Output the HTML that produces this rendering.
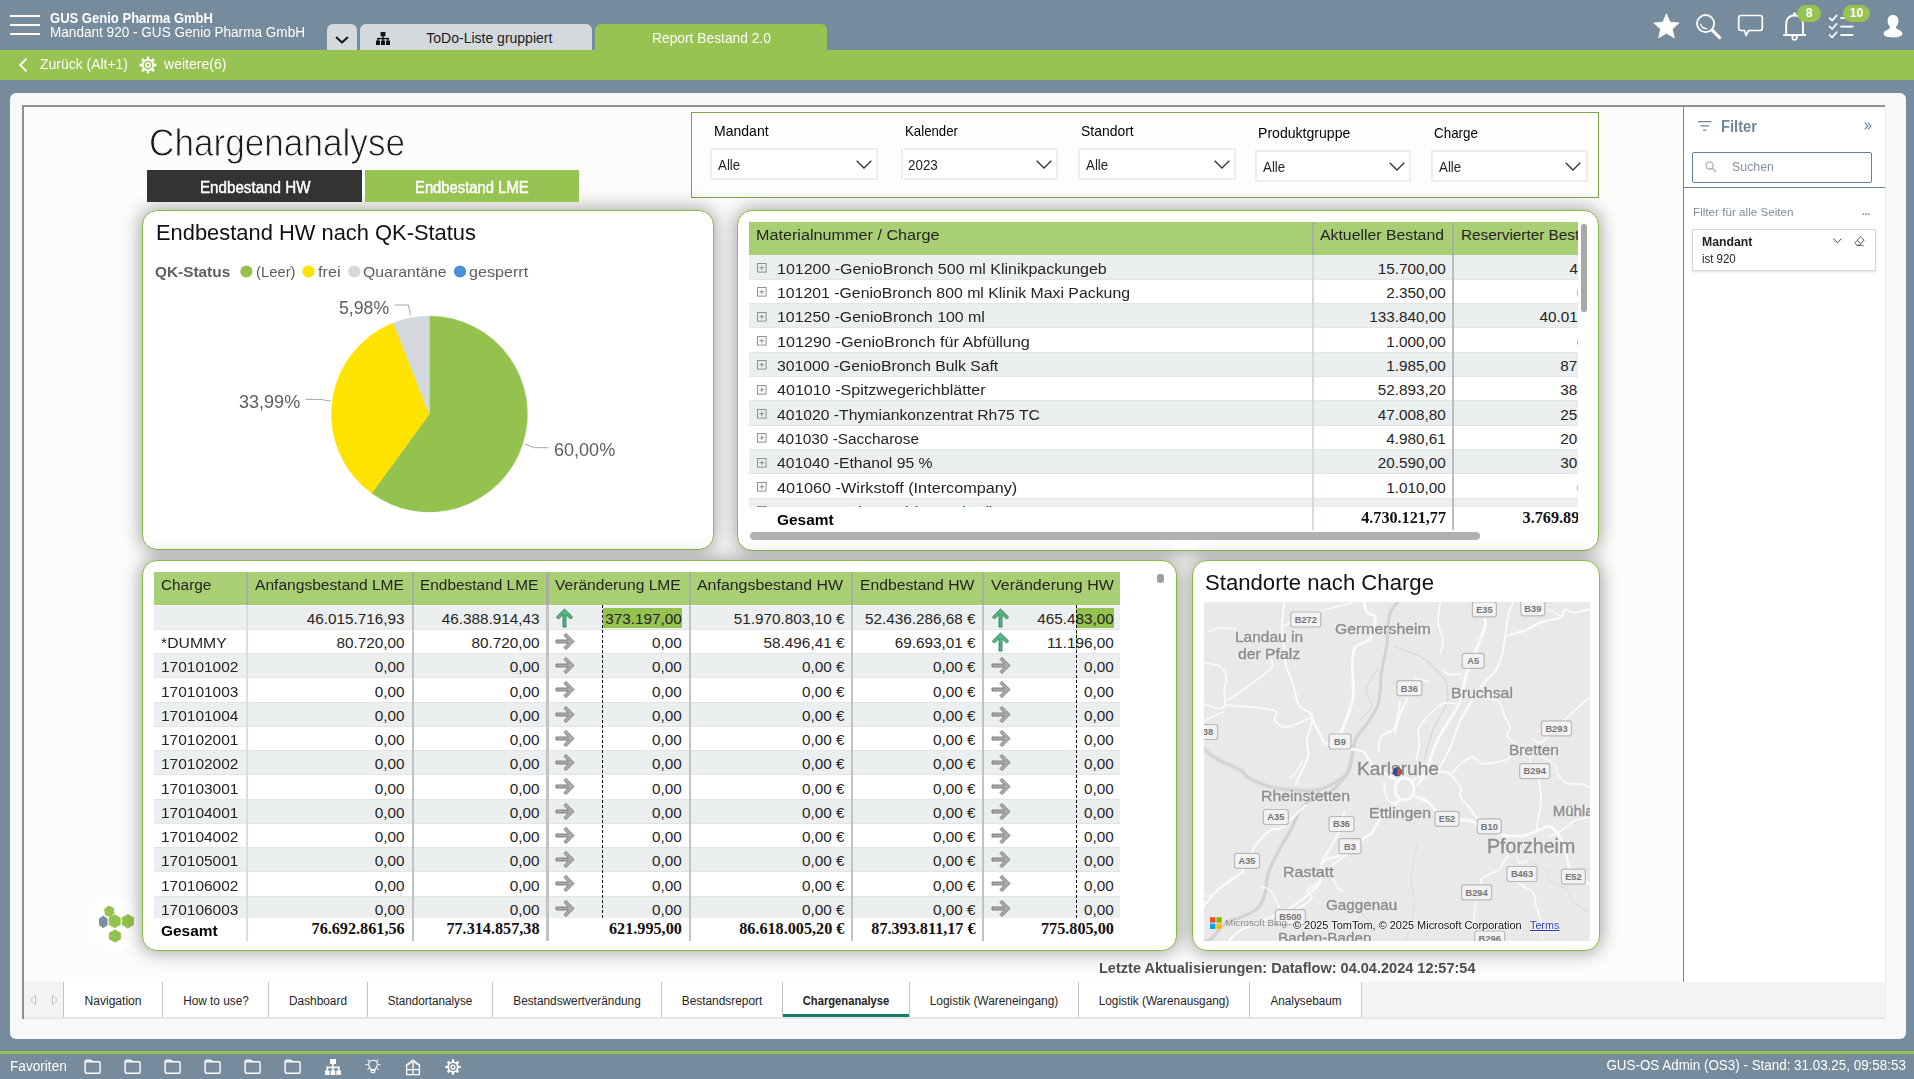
<!DOCTYPE html>
<html><head><meta charset="utf-8"><title>Report Bestand 2.0</title><style>
html,body{margin:0;padding:0;}
body{width:1914px;height:1079px;overflow:hidden;background:#768B9B;font-family:"Liberation Sans", sans-serif;position:relative;}
.t{position:absolute;white-space:nowrap;line-height:1;}
.r{position:absolute;}
svg{position:absolute;overflow:visible;}
.clip{position:absolute;overflow:hidden;}
</style></head><body>
<div class="r" style="left:10.00px;top:15.00px;width:30.00px;height:2.00px;background:#ffffff;"></div>
<div class="r" style="left:10.00px;top:24.00px;width:30.00px;height:2.00px;background:#ffffff;"></div>
<div class="r" style="left:10.00px;top:33.00px;width:30.00px;height:2.00px;background:#ffffff;"></div>
<span class="t" style="top:10.65px;font-size:14px;color:#ffffff;font-weight:bold;left:50.00px;transform-origin:0 50%;transform:scaleX(0.9312);">GUS Genio Pharma GmbH</span>
<span class="t" style="top:24.85px;font-size:14px;color:#ffffff;left:50.00px;transform-origin:0 50%;transform:scaleX(0.9695);">Mandant 920 - GUS Genio Pharma GmbH</span>
<div class="r" style="left:327.00px;top:24.00px;width:30.00px;height:26.00px;background:#D3D9DD;border-radius:6px 6px 0 0;"></div>
<svg style="left:334px;top:34px" width="16" height="12" viewBox="0 0 16 12"><path d="M2.6 3.6 L8 8.4 L13.4 3.6" fill="none" stroke="#111" stroke-width="2" stroke-linecap="round" stroke-linejoin="round"/></svg>
<div class="r" style="left:360.00px;top:24.00px;width:232.00px;height:26.00px;background:#D3D9DD;border-radius:6px 6px 0 0;"></div>
<svg style="left:376px;top:32px" width="14" height="13" viewBox="0 0 14 13"><g fill="#111"><rect x="4.6" y="0" width="4.8" height="4.2"/><rect x="0" y="8.6" width="4" height="4.4"/><rect x="5" y="8.6" width="4" height="4.4"/><rect x="10" y="8.6" width="4" height="4.4"/><rect x="6.3" y="4" width="1.4" height="5"/><rect x="1.3" y="5.9" width="11.4" height="1.4"/><rect x="1.3" y="5.9" width="1.4" height="3"/><rect x="11.3" y="5.9" width="1.4" height="3"/></g></svg>
<span class="t" style="top:31.15px;font-size:14px;color:#1c1c1c;left:426.30px;transform-origin:0 50%;">ToDo-Liste gruppiert</span>
<div class="r" style="left:595.00px;top:24.00px;width:232.00px;height:26.00px;background:#96C351;border-radius:6px 6px 0 0;"></div>
<span class="t" style="top:31.15px;font-size:14px;color:#ffffff;left:651.50px;transform-origin:0 50%;transform:scaleX(0.9864);">Report Bestand 2.0</span>
<svg style="left:1653px;top:13px" width="27" height="28" viewBox="0 0 27 28"><path d="M13.45 0.80 L17.04 9.16 L26.10 9.99 L19.25 15.99 L21.27 24.86 L13.45 20.20 L5.63 24.86 L7.65 15.99 L0.80 9.99 L9.86 9.16 Z" fill="#fff" stroke="#fff" stroke-width="0.8" stroke-linejoin="round"/></svg>
<svg style="left:1695px;top:13px" width="27" height="27" viewBox="0 0 27 27"><circle cx="10.6" cy="10.6" r="8.6" fill="none" stroke="#fff" stroke-width="1.8"/><path d="M5.6 10.8 A5.2 5.2 0 0 0 12.2 15.4" fill="none" stroke="#fff" stroke-width="1.4"/><path d="M17.2 17.2 L24.6 24.6" stroke="#fff" stroke-width="3.2" stroke-linecap="round"/></svg>
<svg style="left:1737px;top:14px" width="27" height="24" viewBox="0 0 27 24"><path d="M4 1.5 H23 Q25.3 1.5 25.3 3.8 V14.2 Q25.3 16.5 23 16.5 H11.6 L9 21.6 L7.6 16.5 H4 Q1.7 16.5 1.7 14.2 V3.8 Q1.7 1.5 4 1.5 Z" fill="none" stroke="#fff" stroke-width="1.7" stroke-linejoin="round"/></svg>
<svg style="left:1782px;top:11px" width="26" height="31" viewBox="0 0 26 31"><path d="M4.2 23.8 V13.2 Q4.2 4.6 12.6 4.2 Q21 4.6 21 13.2 V23.8" fill="none" stroke="#fff" stroke-width="1.9"/><path d="M1.2 24 H24" stroke="#fff" stroke-width="1.9"/><circle cx="12.6" cy="26.6" r="2.3" fill="none" stroke="#fff" stroke-width="1.6"/><circle cx="12.6" cy="2.8" r="1.5" fill="#fff"/></svg>
<div class="r" style="left:1797.00px;top:5.00px;width:24.00px;height:17.00px;background:#96C351;border-radius:9px;"></div>
<span class="t" style="top:7.44px;font-size:12px;color:#ffffff;font-weight:bold;left:1809.00px;transform:translateX(-50%) scaleX(1.0000);">8</span>
<svg style="left:1828px;top:13px" width="27" height="26" viewBox="0 0 27 26"><g fill="none" stroke="#fff" stroke-width="1.7" stroke-linecap="round" stroke-linejoin="round"><path d="M1.6 5.2 L4.2 7.6 L8.6 2.4"/><path d="M1.6 13.6 L4.2 16 L8.6 10.8"/><path d="M1.6 22 L4.2 24.4 L8.6 19.2"/></g><g stroke="#fff" stroke-width="1.9"><path d="M12.4 5 H25.4"/><path d="M12.4 13.6 H25.4"/><path d="M12.4 22 H25.4"/></g></svg>
<div class="r" style="left:1843.00px;top:5.00px;width:27.00px;height:17.00px;background:#96C351;border-radius:9px;"></div>
<span class="t" style="top:7.44px;font-size:12px;color:#ffffff;font-weight:bold;left:1856.50px;transform:translateX(-50%) scaleX(1.0000);">10</span>
<svg style="left:1883px;top:14px" width="20" height="24" viewBox="0 0 20 24"><path d="M10 1 C13.4 1 15.4 3.4 15.4 6.8 C15.4 9.6 14.2 11.6 13 12.8 C13 14.4 14 15.2 16 16 C18.4 17 19.4 18 19.4 20 C19.4 22.2 15 23.4 10 23.4 C5 23.4 0.6 22.2 0.6 20 C0.6 18 1.6 17 4 16 C6 15.2 7 14.4 7 12.8 C5.8 11.6 4.6 9.6 4.6 6.8 C4.6 3.4 6.6 1 10 1 Z" fill="#fff"/></svg>
<div class="r" style="left:0.00px;top:50.00px;width:1914.00px;height:30.00px;background:#96C351;"></div>
<svg style="left:18px;top:57px" width="12" height="16" viewBox="0 0 12 16"><path d="M8.6 1.6 L2.2 8 L8.6 14.4" fill="none" stroke="#fff" stroke-width="2" stroke-linecap="butt" stroke-linejoin="miter"/></svg>
<span class="t" style="top:57.15px;font-size:14px;color:#ffffff;left:40.00px;transform-origin:0 50%;transform:scaleX(0.9965);">Zurück (Alt+1)</span>
<svg style="left:148px;top:65px" width="1" height="1"><g fill="none" stroke="#fff"><circle cx="0" cy="0" r="5.3" stroke-width="1.9"/><circle cx="0" cy="0" r="2.1" stroke-width="1.5"/></g><g fill="#fff"><rect x="-1.25" y="-8.5" width="2.5" height="3.2" transform="rotate(0)"/><rect x="-1.25" y="-8.5" width="2.5" height="3.2" transform="rotate(45)"/><rect x="-1.25" y="-8.5" width="2.5" height="3.2" transform="rotate(90)"/><rect x="-1.25" y="-8.5" width="2.5" height="3.2" transform="rotate(135)"/><rect x="-1.25" y="-8.5" width="2.5" height="3.2" transform="rotate(180)"/><rect x="-1.25" y="-8.5" width="2.5" height="3.2" transform="rotate(225)"/><rect x="-1.25" y="-8.5" width="2.5" height="3.2" transform="rotate(270)"/><rect x="-1.25" y="-8.5" width="2.5" height="3.2" transform="rotate(315)"/></g></svg>
<span class="t" style="top:57.15px;font-size:14px;color:#ffffff;left:164.00px;transform-origin:0 50%;transform:scaleX(1.0040);">weitere(6)</span>
<div class="r" style="left:10.00px;top:93.00px;width:1896.00px;height:946.00px;background:#F7F8FA;border-radius:6px;"></div>
<div class="r" style="left:22.00px;top:105.00px;width:1862.60px;height:914.00px;background:#909090;"></div>
<div class="r" style="left:24.00px;top:107.00px;width:1862.00px;height:912.00px;background:#EBEBEB;"></div>
<div class="r" style="left:24.00px;top:107.00px;width:1860.00px;height:910.00px;background:#FCFCFA;"></div>
<div class="r" style="left:0.00px;top:1051.00px;width:1914.00px;height:3.00px;background:#96C351;"></div>
<span class="t" style="top:1059.15px;font-size:14px;color:#ffffff;left:10.20px;transform-origin:0 50%;transform:scaleX(0.9733);">Favoriten</span>
<svg style="left:84.4px;top:1059.4px" width="17" height="16" viewBox="0 0 17 16"><path d="M1.1 3 Q1.1 1.2 2.6 1.2 H6.4 Q7.6 1.2 8 2.8 H14.6 Q16.1 2.8 16.1 4.3 V12.8 Q16.1 14.3 14.6 14.3 H2.6 Q1.1 14.3 1.1 12.8 Z M1.1 2.9 H8" fill="none" stroke="#fff" stroke-width="1.4" stroke-linejoin="round"/></svg>
<svg style="left:124.4px;top:1059.4px" width="17" height="16" viewBox="0 0 17 16"><path d="M1.1 3 Q1.1 1.2 2.6 1.2 H6.4 Q7.6 1.2 8 2.8 H14.6 Q16.1 2.8 16.1 4.3 V12.8 Q16.1 14.3 14.6 14.3 H2.6 Q1.1 14.3 1.1 12.8 Z M1.1 2.9 H8" fill="none" stroke="#fff" stroke-width="1.4" stroke-linejoin="round"/></svg>
<svg style="left:164.4px;top:1059.4px" width="17" height="16" viewBox="0 0 17 16"><path d="M1.1 3 Q1.1 1.2 2.6 1.2 H6.4 Q7.6 1.2 8 2.8 H14.6 Q16.1 2.8 16.1 4.3 V12.8 Q16.1 14.3 14.6 14.3 H2.6 Q1.1 14.3 1.1 12.8 Z M1.1 2.9 H8" fill="none" stroke="#fff" stroke-width="1.4" stroke-linejoin="round"/></svg>
<svg style="left:204.4px;top:1059.4px" width="17" height="16" viewBox="0 0 17 16"><path d="M1.1 3 Q1.1 1.2 2.6 1.2 H6.4 Q7.6 1.2 8 2.8 H14.6 Q16.1 2.8 16.1 4.3 V12.8 Q16.1 14.3 14.6 14.3 H2.6 Q1.1 14.3 1.1 12.8 Z M1.1 2.9 H8" fill="none" stroke="#fff" stroke-width="1.4" stroke-linejoin="round"/></svg>
<svg style="left:244.4px;top:1059.4px" width="17" height="16" viewBox="0 0 17 16"><path d="M1.1 3 Q1.1 1.2 2.6 1.2 H6.4 Q7.6 1.2 8 2.8 H14.6 Q16.1 2.8 16.1 4.3 V12.8 Q16.1 14.3 14.6 14.3 H2.6 Q1.1 14.3 1.1 12.8 Z M1.1 2.9 H8" fill="none" stroke="#fff" stroke-width="1.4" stroke-linejoin="round"/></svg>
<svg style="left:284.4px;top:1059.4px" width="17" height="16" viewBox="0 0 17 16"><path d="M1.1 3 Q1.1 1.2 2.6 1.2 H6.4 Q7.6 1.2 8 2.8 H14.6 Q16.1 2.8 16.1 4.3 V12.8 Q16.1 14.3 14.6 14.3 H2.6 Q1.1 14.3 1.1 12.8 Z M1.1 2.9 H8" fill="none" stroke="#fff" stroke-width="1.4" stroke-linejoin="round"/></svg>
<svg style="left:325px;top:1059px" width="16" height="16" viewBox="0 0 16 16"><g fill="#fff"><rect x="5" y="0" width="6" height="5"/><rect x="0" y="11.4" width="4.6" height="4.6"/><rect x="5.7" y="11.4" width="4.6" height="4.6"/><rect x="11.4" y="11.4" width="4.6" height="4.6"/><rect x="7.2" y="4.8" width="1.6" height="7"/><rect x="1.5" y="7.6" width="13" height="1.6"/><rect x="1.5" y="7.6" width="1.6" height="4"/><rect x="12.9" y="7.6" width="1.6" height="4"/></g></svg>
<svg style="left:365px;top:1059px" width="16" height="16" viewBox="0 0 16 16"><g fill="none" stroke="#fff" stroke-width="1.1" stroke-linecap="round"><path d="M5.8 10.6 C5.6 8.8 3.6 8 3.6 5.4 C3.6 2.8 5.6 1.2 8 1.2 C10.4 1.2 12.4 2.8 12.4 5.4 C12.4 8 10.4 8.8 10.2 10.6 Z"/><rect x="6.2" y="11.4" width="3.6" height="2.4" rx="1.1"/><path d="M1 5.6 H2.2 M13.8 5.6 H15 M3 1 L3.8 1.8 M13 1 L12.2 1.8 M3 10.4 L3.8 9.7 M13 10.4 L12.2 9.7"/></g></svg>
<svg style="left:405px;top:1058.6px" width="16" height="17" viewBox="0 0 16 17"><g fill="none" stroke="#fff" stroke-width="1.3" stroke-linejoin="round"><path d="M0.8 6.6 L8 1 L15.2 6.6"/><path d="M1.6 6.2 V15.6 H14.4 V6.2"/><path d="M8 2.4 V15.6 M1.6 10.6 H14.4"/><path d="M2.4 6.4 L8 2.6 L13.6 6.4" stroke-width="0.9"/></g></svg>
<svg style="left:453.2px;top:1067px" width="1" height="1"><g transform="scale(0.9)"><g fill="none" stroke="#fff"><circle cx="0" cy="0" r="5.3" stroke-width="1.9"/><circle cx="0" cy="0" r="2.1" stroke-width="1.5"/></g><g fill="#fff"><rect x="-1.25" y="-8.5" width="2.5" height="3.2" transform="rotate(0)"/><rect x="-1.25" y="-8.5" width="2.5" height="3.2" transform="rotate(45)"/><rect x="-1.25" y="-8.5" width="2.5" height="3.2" transform="rotate(90)"/><rect x="-1.25" y="-8.5" width="2.5" height="3.2" transform="rotate(135)"/><rect x="-1.25" y="-8.5" width="2.5" height="3.2" transform="rotate(180)"/><rect x="-1.25" y="-8.5" width="2.5" height="3.2" transform="rotate(225)"/><rect x="-1.25" y="-8.5" width="2.5" height="3.2" transform="rotate(270)"/><rect x="-1.25" y="-8.5" width="2.5" height="3.2" transform="rotate(315)"/></g></g></svg>
<span class="t" style="top:1058.35px;font-size:14px;color:#ffffff;right:7.80px;transform-origin:100% 50%;transform:scaleX(0.9570);">GUS-OS Admin (OS3) - Stand: 31.03.25, 09:58:53</span>
<div class="r" style="left:88px;top:897px;width:54px;height:54px;border-radius:50%;background:radial-gradient(circle,#fff 62%,rgba(255,255,255,0) 100%);"></div>
<svg style="left:0;top:0" width="1914" height="1079"><polygon points="108.52,905.46 104.11,909.09 104.89,914.93 110.08,917.14 114.49,913.51 113.71,907.67" fill="#94C24F"/><polygon points="114.70,914.20 108.72,917.70 108.72,924.70 114.70,928.20 120.68,924.70 120.68,917.70" fill="#94C24F"/><polygon points="127.90,914.00 121.92,917.60 121.92,924.80 127.90,928.40 133.88,924.80 133.88,917.60" fill="#94C24F"/><polygon points="103.30,915.60 98.97,918.75 98.97,925.05 103.30,928.20 107.63,925.05 107.63,918.75" fill="#7A91A2"/><polygon points="114.90,929.60 108.92,932.85 108.92,939.35 114.90,942.60 120.88,939.35 120.88,932.85" fill="#94C24F"/></svg>
<span class="t" style="top:123.05px;font-size:39.4px;color:#1d1c1b;left:148.80px;transform-origin:0 50%;transform:scaleX(0.8924);-webkit-text-stroke:0.9px #FCFCFA;">Chargenanalyse</span>
<div class="r" style="left:147.00px;top:169.60px;width:215.40px;height:32.50px;background:#333333;z-index:3;"></div>
<div class="r" style="left:364.80px;top:169.60px;width:213.90px;height:32.50px;background:#96C351;z-index:3;"></div>
<span class="t" style="top:180.39px;font-size:15.6px;color:#fff;left:199.70px;transform-origin:0 50%;transform:scaleX(0.9730);-webkit-text-stroke:0.45px #fff;z-index:4;">Endbestand HW</span>
<span class="t" style="top:180.39px;font-size:15.6px;color:#fff;left:415.00px;transform-origin:0 50%;transform:scaleX(0.9495);-webkit-text-stroke:0.45px #fff;z-index:4;">Endbestand LME</span>
<div class="r" style="left:691.00px;top:112.00px;width:908.00px;height:86.40px;background:#FDFDFC;box-sizing:border-box;border:1px solid #7EA548;"></div>
<span class="t" style="top:124.01px;font-size:14.4px;color:#000;left:713.80px;transform-origin:0 50%;transform:scaleX(0.9747);">Mandant</span>
<div class="r" style="left:710.00px;top:148.00px;width:168.00px;height:32.00px;background:#fff;box-sizing:border-box;border:2px solid #EEEEEE;"></div>
<span class="t" style="top:158.31px;font-size:14.4px;color:#252423;left:717.80px;transform-origin:0 50%;transform:scaleX(0.9250);">Alle</span>
<svg style="left:855.5px;top:160.0px" width="16" height="9" viewBox="0 0 16 9"><path d="M0.7 0.8 L8 8 L15.3 0.8" fill="none" stroke="#333" stroke-width="1.3"/></svg>
<span class="t" style="top:124.01px;font-size:14.4px;color:#000;left:905.00px;transform-origin:0 50%;transform:scaleX(0.9200);">Kalender</span>
<div class="r" style="left:901.40px;top:148.00px;width:156.60px;height:32.00px;background:#fff;box-sizing:border-box;border:2px solid #EEEEEE;"></div>
<span class="t" style="top:158.31px;font-size:14.4px;color:#252423;left:908.30px;transform-origin:0 50%;transform:scaleX(0.9308);">2023</span>
<svg style="left:1035.5px;top:160.0px" width="16" height="9" viewBox="0 0 16 9"><path d="M0.7 0.8 L8 8 L15.3 0.8" fill="none" stroke="#333" stroke-width="1.3"/></svg>
<span class="t" style="top:124.01px;font-size:14.4px;color:#000;left:1081.00px;transform-origin:0 50%;transform:scaleX(0.9686);">Standort</span>
<div class="r" style="left:1078.20px;top:148.00px;width:157.80px;height:32.00px;background:#fff;box-sizing:border-box;border:2px solid #EEEEEE;"></div>
<span class="t" style="top:158.31px;font-size:14.4px;color:#252423;left:1086.20px;transform-origin:0 50%;transform:scaleX(0.9250);">Alle</span>
<svg style="left:1213.5px;top:160.0px" width="16" height="9" viewBox="0 0 16 9"><path d="M0.7 0.8 L8 8 L15.3 0.8" fill="none" stroke="#333" stroke-width="1.3"/></svg>
<span class="t" style="top:126.01px;font-size:14.4px;color:#000;left:1258.00px;transform-origin:0 50%;transform:scaleX(0.9777);">Produktgruppe</span>
<div class="r" style="left:1255.00px;top:150.00px;width:156.40px;height:32.00px;background:#fff;box-sizing:border-box;border:2px solid #EEEEEE;"></div>
<span class="t" style="top:160.31px;font-size:14.4px;color:#252423;left:1263.20px;transform-origin:0 50%;transform:scaleX(0.9250);">Alle</span>
<svg style="left:1388.9px;top:162.0px" width="16" height="9" viewBox="0 0 16 9"><path d="M0.7 0.8 L8 8 L15.3 0.8" fill="none" stroke="#333" stroke-width="1.3"/></svg>
<span class="t" style="top:126.01px;font-size:14.4px;color:#000;left:1434.00px;transform-origin:0 50%;transform:scaleX(0.9321);">Charge</span>
<div class="r" style="left:1431.00px;top:150.00px;width:156.50px;height:32.00px;background:#fff;box-sizing:border-box;border:2px solid #EEEEEE;"></div>
<span class="t" style="top:160.31px;font-size:14.4px;color:#252423;left:1438.80px;transform-origin:0 50%;transform:scaleX(0.9250);">Alle</span>
<svg style="left:1565.0px;top:162.0px" width="16" height="9" viewBox="0 0 16 9"><path d="M0.7 0.8 L8 8 L15.3 0.8" fill="none" stroke="#333" stroke-width="1.3"/></svg>
<div class="r" style="left:142.00px;top:210.00px;width:571.80px;height:339.60px;background:#fff;box-sizing:border-box;border:1px solid #8ABB45;border-radius:15px;box-shadow:0 0 18px 2px rgba(0,0,0,0.34);"></div>
<span class="t" style="top:221.75px;font-size:21.2px;color:#111;left:155.50px;transform-origin:0 50%;transform:scaleX(1.0331);">Endbestand HW nach QK-Status</span>
<span class="t" style="top:264.57px;font-size:14.8px;color:#605E5C;font-weight:bold;left:155.00px;transform-origin:0 50%;transform:scaleX(1.0393);">QK-Status</span>
<svg style="left:0;top:0" width="1914" height="1079"><circle cx="246.4" cy="271.5" r="6.1" fill="#94C24F"/><circle cx="308.5" cy="271.5" r="6.1" fill="#FFE300"/><circle cx="354.4" cy="271.5" r="6.1" fill="#D2D8DC"/><circle cx="460" cy="271.5" r="6.1" fill="#4A90D9"/><path d="M429.4 414 L429.40 316.00 A98 98 0 1 1 371.66 493.18 Z" fill="#94C24F" stroke="#94C24F" stroke-width="0.4"/><path d="M429.4 414 L371.66 493.18 A98 98 0 0 1 393.32 322.88 Z" fill="#FFE300" stroke="#FFE300" stroke-width="0.4"/><path d="M429.4 414 L393.32 322.88 A98 98 0 0 1 429.40 316.00 Z" fill="#D2D8DC" stroke="#D2D8DC" stroke-width="0.4"/><g fill="none" stroke="#A6A6A6" stroke-width="1"><path d="M524.4 444 L534.4 447.7 H548.5"/><path d="M305.5 399.4 H319.7 L330.8 401"/><path d="M394.3 305 H408.4 L410.6 315"/></g></svg>
<span class="t" style="top:264.40px;font-size:15px;color:#605E5C;left:255.80px;transform-origin:0 50%;transform:scaleX(0.9871);">(Leer)</span>
<span class="t" style="top:264.40px;font-size:15px;color:#605E5C;left:318.00px;transform-origin:0 50%;transform:scaleX(1.0795);">frei</span>
<span class="t" style="top:264.40px;font-size:15px;color:#605E5C;left:363.00px;transform-origin:0 50%;transform:scaleX(1.0551);">Quarantäne</span>
<span class="t" style="top:264.40px;font-size:15px;color:#605E5C;left:469.00px;transform-origin:0 50%;transform:scaleX(1.0758);">gesperrt</span>
<span class="t" style="top:441.22px;font-size:18.4px;color:#605E5C;left:553.80px;transform-origin:0 50%;transform:scaleX(0.9812);">60,00%</span>
<span class="t" style="top:393.02px;font-size:18.4px;color:#605E5C;left:239.00px;transform-origin:0 50%;transform:scaleX(0.9812);">33,99%</span>
<span class="t" style="top:299.02px;font-size:18.4px;color:#605E5C;left:338.50px;transform-origin:0 50%;transform:scaleX(0.9606);">5,98%</span>
<span class="t" style="top:959.83px;font-size:15.2px;color:#4f4f4f;font-weight:bold;left:1098.70px;transform-origin:0 50%;transform:scaleX(0.9565);">Letzte Aktualisierungen: Dataflow: 04.04.2024 12:57:54</span>
<div class="r" style="left:24.00px;top:982.00px;width:1660.00px;height:37.00px;background:#F3F3F3;"></div>
<div class="r" style="left:24.00px;top:1017.00px;width:1860.00px;height:2.00px;background:#E6E6E6;"></div>
<div class="r" style="left:64.00px;top:982.00px;width:1297.00px;height:35.00px;background:#fff;"></div>
<div class="r" style="left:63.00px;top:982.00px;width:1.00px;height:35.00px;background:#C4C4C4;"></div>
<div class="r" style="left:162.00px;top:982.00px;width:1.00px;height:35.00px;background:#C4C4C4;"></div>
<div class="r" style="left:268.00px;top:982.00px;width:1.00px;height:35.00px;background:#C4C4C4;"></div>
<div class="r" style="left:367.00px;top:982.00px;width:1.00px;height:35.00px;background:#C4C4C4;"></div>
<div class="r" style="left:492.00px;top:982.00px;width:1.00px;height:35.00px;background:#C4C4C4;"></div>
<div class="r" style="left:661.00px;top:982.00px;width:1.00px;height:35.00px;background:#C4C4C4;"></div>
<div class="r" style="left:782.00px;top:982.00px;width:1.00px;height:35.00px;background:#C4C4C4;"></div>
<div class="r" style="left:909.00px;top:982.00px;width:1.00px;height:35.00px;background:#C4C4C4;"></div>
<div class="r" style="left:1078.00px;top:982.00px;width:1.00px;height:35.00px;background:#C4C4C4;"></div>
<div class="r" style="left:1249.00px;top:982.00px;width:1.00px;height:35.00px;background:#C4C4C4;"></div>
<div class="r" style="left:1361.00px;top:982.00px;width:1.00px;height:35.00px;background:#C4C4C4;"></div>
<span class="t" style="top:994.64px;font-size:12px;color:#252423;left:113.00px;transform:translateX(-50%) scaleX(1.0052);">Navigation</span>
<span class="t" style="top:994.64px;font-size:12px;color:#252423;left:215.50px;transform:translateX(-50%) scaleX(0.9820);">How to use?</span>
<span class="t" style="top:994.64px;font-size:12px;color:#252423;left:318.00px;transform:translateX(-50%) scaleX(0.9878);">Dashboard</span>
<span class="t" style="top:994.64px;font-size:12px;color:#252423;left:430.00px;transform:translateX(-50%) scaleX(0.9742);">Standortanalyse</span>
<span class="t" style="top:994.64px;font-size:12px;color:#252423;left:577.00px;transform:translateX(-50%) scaleX(0.9852);">Bestandswertverändung</span>
<span class="t" style="top:994.64px;font-size:12px;color:#252423;left:722.00px;transform:translateX(-50%) scaleX(0.9891);">Bestandsreport</span>
<span class="t" style="top:994.64px;font-size:12px;color:#252423;font-weight:bold;left:846.00px;transform:translateX(-50%) scaleX(0.9329);">Chargenanalyse</span>
<div class="r" style="left:783.00px;top:1014.00px;width:126.00px;height:3.00px;background:#10806B;"></div>
<span class="t" style="top:994.64px;font-size:12px;color:#252423;left:994.00px;transform:translateX(-50%) scaleX(0.9913);">Logistik (Wareneingang)</span>
<span class="t" style="top:994.64px;font-size:12px;color:#252423;left:1164.00px;transform:translateX(-50%) scaleX(0.9814);">Logistik (Warenausgang)</span>
<span class="t" style="top:994.64px;font-size:12px;color:#252423;left:1305.50px;transform:translateX(-50%) scaleX(0.9764);">Analysebaum</span>
<svg style="left:30px;top:993px" width="30" height="14" viewBox="0 0 30 14"><g fill="none" stroke="#C8C6C4" stroke-width="1"><path d="M5.5 2 L1 7 L5.5 12 Z"/><path d="M22.5 2 L27 7 L22.5 12 Z"/></g></svg>
<div class="r" style="left:737.40px;top:210.40px;width:861.20px;height:340.30px;background:#fff;box-sizing:border-box;border:1px solid #8ABB45;border-radius:15px;box-shadow:0 0 18px 2px rgba(0,0,0,0.34);"></div>
<div class="r" style="left:749.00px;top:222.00px;width:829.00px;height:33.00px;background:#A9CF75;"></div>
<div class="clip" style="left:749px;top:255px;width:829px;height:252px;">
<div style="position:absolute;left:-749px;top:-255px;width:1914px;height:1079px;">
<div class="r" style="left:749.00px;top:255.30px;width:829.00px;height:24.33px;background:#ECEFF0;"></div>
<div class="r" style="left:749.00px;top:278.63px;width:829.00px;height:1.00px;background:#E3E4E4;"></div>
<svg style="left:757px;top:262.90px" width="10" height="10" viewBox="0 0 10 10"><rect x="0.5" y="0.5" width="8.6" height="8.6" fill="none" stroke="#8E8E8E" stroke-width="1"/><path d="M2.4 4.8 H7.2 M4.8 2.4 V7.2" stroke="#8E8E8E" stroke-width="1"/></svg>
<span class="t" style="top:260.75px;font-size:15.3px;color:#252423;left:777.40px;transform-origin:0 50%;transform:scaleX(1.0450);">101200 -GenioBronch 500 ml Klinikpackungeb</span>
<span class="t" style="top:260.75px;font-size:15.3px;color:#252423;right:468.20px;transform-origin:100% 50%;">15.700,00</span>
<span class="t" style="top:260.75px;font-size:15.3px;color:#252423;left:1569.60px;transform-origin:0 50%;">4.000,00</span>
<div class="r" style="left:749.00px;top:279.63px;width:829.00px;height:24.33px;background:#fff;"></div>
<div class="r" style="left:749.00px;top:302.96px;width:829.00px;height:1.00px;background:#E3E4E4;"></div>
<svg style="left:757px;top:287.23px" width="10" height="10" viewBox="0 0 10 10"><rect x="0.5" y="0.5" width="8.6" height="8.6" fill="none" stroke="#8E8E8E" stroke-width="1"/><path d="M2.4 4.8 H7.2 M4.8 2.4 V7.2" stroke="#8E8E8E" stroke-width="1"/></svg>
<span class="t" style="top:285.08px;font-size:15.3px;color:#252423;left:777.40px;transform-origin:0 50%;transform:scaleX(1.0353);">101201 -GenioBronch 800 ml Klinik Maxi Packung</span>
<span class="t" style="top:285.08px;font-size:15.3px;color:#252423;right:468.20px;transform-origin:100% 50%;">2.350,00</span>
<span class="t" style="top:285.08px;font-size:15.3px;color:#252423;left:1576.90px;transform-origin:0 50%;">0,00</span>
<div class="r" style="left:749.00px;top:303.96px;width:829.00px;height:24.33px;background:#ECEFF0;"></div>
<div class="r" style="left:749.00px;top:327.29px;width:829.00px;height:1.00px;background:#E3E4E4;"></div>
<svg style="left:757px;top:311.56px" width="10" height="10" viewBox="0 0 10 10"><rect x="0.5" y="0.5" width="8.6" height="8.6" fill="none" stroke="#8E8E8E" stroke-width="1"/><path d="M2.4 4.8 H7.2 M4.8 2.4 V7.2" stroke="#8E8E8E" stroke-width="1"/></svg>
<span class="t" style="top:309.41px;font-size:15.3px;color:#252423;left:777.40px;transform-origin:0 50%;transform:scaleX(1.0403);">101250 -GenioBronch 100 ml</span>
<span class="t" style="top:309.41px;font-size:15.3px;color:#252423;right:468.20px;transform-origin:100% 50%;">133.840,00</span>
<span class="t" style="top:309.41px;font-size:15.3px;color:#252423;left:1539.60px;transform-origin:0 50%;">40.010,00</span>
<div class="r" style="left:749.00px;top:328.29px;width:829.00px;height:24.33px;background:#fff;"></div>
<div class="r" style="left:749.00px;top:351.62px;width:829.00px;height:1.00px;background:#E3E4E4;"></div>
<svg style="left:757px;top:335.89px" width="10" height="10" viewBox="0 0 10 10"><rect x="0.5" y="0.5" width="8.6" height="8.6" fill="none" stroke="#8E8E8E" stroke-width="1"/><path d="M2.4 4.8 H7.2 M4.8 2.4 V7.2" stroke="#8E8E8E" stroke-width="1"/></svg>
<span class="t" style="top:333.74px;font-size:15.3px;color:#252423;left:777.40px;transform-origin:0 50%;transform:scaleX(1.0582);">101290 -GenioBronch für Abfüllung</span>
<span class="t" style="top:333.74px;font-size:15.3px;color:#252423;right:468.20px;transform-origin:100% 50%;">1.000,00</span>
<span class="t" style="top:333.74px;font-size:15.3px;color:#252423;left:1576.90px;transform-origin:0 50%;">0,00</span>
<div class="r" style="left:749.00px;top:352.62px;width:829.00px;height:24.33px;background:#ECEFF0;"></div>
<div class="r" style="left:749.00px;top:375.95px;width:829.00px;height:1.00px;background:#E3E4E4;"></div>
<svg style="left:757px;top:360.22px" width="10" height="10" viewBox="0 0 10 10"><rect x="0.5" y="0.5" width="8.6" height="8.6" fill="none" stroke="#8E8E8E" stroke-width="1"/><path d="M2.4 4.8 H7.2 M4.8 2.4 V7.2" stroke="#8E8E8E" stroke-width="1"/></svg>
<span class="t" style="top:358.07px;font-size:15.3px;color:#252423;left:777.40px;transform-origin:0 50%;transform:scaleX(1.0281);">301000 -GenioBronch Bulk Saft</span>
<span class="t" style="top:358.07px;font-size:15.3px;color:#252423;right:468.20px;transform-origin:100% 50%;">1.985,00</span>
<span class="t" style="top:358.07px;font-size:15.3px;color:#252423;left:1560.30px;transform-origin:0 50%;">87.000,00</span>
<div class="r" style="left:749.00px;top:376.95px;width:829.00px;height:24.33px;background:#fff;"></div>
<div class="r" style="left:749.00px;top:400.28px;width:829.00px;height:1.00px;background:#E3E4E4;"></div>
<svg style="left:757px;top:384.55px" width="10" height="10" viewBox="0 0 10 10"><rect x="0.5" y="0.5" width="8.6" height="8.6" fill="none" stroke="#8E8E8E" stroke-width="1"/><path d="M2.4 4.8 H7.2 M4.8 2.4 V7.2" stroke="#8E8E8E" stroke-width="1"/></svg>
<span class="t" style="top:382.40px;font-size:15.3px;color:#252423;left:777.40px;transform-origin:0 50%;transform:scaleX(1.0523);">401010 -Spitzwegerichblätter</span>
<span class="t" style="top:382.40px;font-size:15.3px;color:#252423;right:468.20px;transform-origin:100% 50%;">52.893,20</span>
<span class="t" style="top:382.40px;font-size:15.3px;color:#252423;left:1560.30px;transform-origin:0 50%;">38.000,00</span>
<div class="r" style="left:749.00px;top:401.28px;width:829.00px;height:24.33px;background:#ECEFF0;"></div>
<div class="r" style="left:749.00px;top:424.61px;width:829.00px;height:1.00px;background:#E3E4E4;"></div>
<svg style="left:757px;top:408.88px" width="10" height="10" viewBox="0 0 10 10"><rect x="0.5" y="0.5" width="8.6" height="8.6" fill="none" stroke="#8E8E8E" stroke-width="1"/><path d="M2.4 4.8 H7.2 M4.8 2.4 V7.2" stroke="#8E8E8E" stroke-width="1"/></svg>
<span class="t" style="top:406.73px;font-size:15.3px;color:#252423;left:777.40px;transform-origin:0 50%;transform:scaleX(1.0283);">401020 -Thymiankonzentrat Rh75 TC</span>
<span class="t" style="top:406.73px;font-size:15.3px;color:#252423;right:468.20px;transform-origin:100% 50%;">47.008,80</span>
<span class="t" style="top:406.73px;font-size:15.3px;color:#252423;left:1560.30px;transform-origin:0 50%;">25.000,00</span>
<div class="r" style="left:749.00px;top:425.61px;width:829.00px;height:24.33px;background:#fff;"></div>
<div class="r" style="left:749.00px;top:448.94px;width:829.00px;height:1.00px;background:#E3E4E4;"></div>
<svg style="left:757px;top:433.21px" width="10" height="10" viewBox="0 0 10 10"><rect x="0.5" y="0.5" width="8.6" height="8.6" fill="none" stroke="#8E8E8E" stroke-width="1"/><path d="M2.4 4.8 H7.2 M4.8 2.4 V7.2" stroke="#8E8E8E" stroke-width="1"/></svg>
<span class="t" style="top:431.06px;font-size:15.3px;color:#252423;left:777.40px;transform-origin:0 50%;transform:scaleX(1.0066);">401030 -Saccharose</span>
<span class="t" style="top:431.06px;font-size:15.3px;color:#252423;right:468.20px;transform-origin:100% 50%;">4.980,61</span>
<span class="t" style="top:431.06px;font-size:15.3px;color:#252423;left:1560.30px;transform-origin:0 50%;">20.000,00</span>
<div class="r" style="left:749.00px;top:449.94px;width:829.00px;height:24.33px;background:#ECEFF0;"></div>
<div class="r" style="left:749.00px;top:473.27px;width:829.00px;height:1.00px;background:#E3E4E4;"></div>
<svg style="left:757px;top:457.54px" width="10" height="10" viewBox="0 0 10 10"><rect x="0.5" y="0.5" width="8.6" height="8.6" fill="none" stroke="#8E8E8E" stroke-width="1"/><path d="M2.4 4.8 H7.2 M4.8 2.4 V7.2" stroke="#8E8E8E" stroke-width="1"/></svg>
<span class="t" style="top:455.39px;font-size:15.3px;color:#252423;left:777.40px;transform-origin:0 50%;transform:scaleX(1.0271);">401040 -Ethanol 95 %</span>
<span class="t" style="top:455.39px;font-size:15.3px;color:#252423;right:468.20px;transform-origin:100% 50%;">20.590,00</span>
<span class="t" style="top:455.39px;font-size:15.3px;color:#252423;left:1560.30px;transform-origin:0 50%;">30.000,00</span>
<div class="r" style="left:749.00px;top:474.27px;width:829.00px;height:24.33px;background:#fff;"></div>
<div class="r" style="left:749.00px;top:497.60px;width:829.00px;height:1.00px;background:#E3E4E4;"></div>
<svg style="left:757px;top:481.87px" width="10" height="10" viewBox="0 0 10 10"><rect x="0.5" y="0.5" width="8.6" height="8.6" fill="none" stroke="#8E8E8E" stroke-width="1"/><path d="M2.4 4.8 H7.2 M4.8 2.4 V7.2" stroke="#8E8E8E" stroke-width="1"/></svg>
<span class="t" style="top:479.72px;font-size:15.3px;color:#252423;left:777.40px;transform-origin:0 50%;transform:scaleX(1.0595);">401060 -Wirkstoff (Intercompany)</span>
<span class="t" style="top:479.72px;font-size:15.3px;color:#252423;right:468.20px;transform-origin:100% 50%;">1.010,00</span>
<span class="t" style="top:479.72px;font-size:15.3px;color:#252423;left:1576.90px;transform-origin:0 50%;">0,00</span>
<div class="r" style="left:749.00px;top:498.60px;width:829.00px;height:24.33px;background:#ECEFF0;"></div>
<div class="r" style="left:749.00px;top:521.93px;width:829.00px;height:1.00px;background:#E3E4E4;"></div>
<svg style="left:757px;top:506.20px" width="10" height="10" viewBox="0 0 10 10"><rect x="0.5" y="0.5" width="8.6" height="8.6" fill="none" stroke="#8E8E8E" stroke-width="1"/><path d="M2.4 4.8 H7.2 M4.8 2.4 V7.2" stroke="#8E8E8E" stroke-width="1"/></svg>
<span class="t" style="top:504.05px;font-size:15.3px;color:#252423;left:777.40px;transform-origin:0 50%;">401070 -Isobutanol (20 mg/5ml) AP</span>
<span class="t" style="top:504.05px;font-size:15.3px;color:#252423;right:468.20px;transform-origin:100% 50%;">1.000,70</span>
<span class="t" style="top:504.05px;font-size:15.3px;color:#252423;left:1569.00px;transform-origin:0 50%;">1,00</span>
</div></div>
<div class="r" style="left:749.00px;top:507.00px;width:829.00px;height:24.00px;background:#fff;"></div>
<span class="t" style="top:512.43px;font-size:15.2px;color:#000;font-weight:bold;left:777.40px;transform-origin:0 50%;transform:scaleX(1.0176);">Gesamt</span>
<span class="t" style="top:509.50px;font-size:16.2px;color:#111;font-family:'Liberation Serif', serif;font-weight:bold;right:468.20px;transform-origin:100% 50%;transform:scaleX(0.9978);">4.730.121,77</span>
<div class="clip" style="left:1456px;top:507px;width:122px;height:24px;"><div style="position:absolute;left:-1456px;top:-507px;width:1914px;height:1079px;">
<span class="t" style="top:509.50px;font-size:16.2px;color:#111;font-family:'Liberation Serif', serif;font-weight:bold;left:1522.60px;transform-origin:0 50%;">3.769.890,00</span>
</div></div>
<span class="t" style="top:227.05px;font-size:15.3px;color:#252423;left:756.00px;transform-origin:0 50%;transform:scaleX(1.0580);">Materialnummer / Charge</span>
<span class="t" style="top:227.05px;font-size:15.3px;color:#252423;left:1320.00px;transform-origin:0 50%;transform:scaleX(1.0341);">Aktueller Bestand</span>
<div class="clip" style="left:1456px;top:222px;width:122px;height:33px;"><div style="position:absolute;left:-1456px;top:-222px;width:1914px;height:1079px;">
<span class="t" style="top:227.05px;font-size:15.3px;color:#252423;left:1461.00px;transform-origin:0 50%;">Reservierter Bestand</span>
</div></div>
<div class="r" style="left:1311.50px;top:222.00px;width:2.20px;height:33.00px;background:#A8AFA0;"></div>
<div class="r" style="left:1311.50px;top:255.00px;width:2.20px;height:275.00px;background:#D6DADE;"></div>
<div class="r" style="left:1452.20px;top:222.00px;width:2.20px;height:33.00px;background:#A8AFA0;"></div>
<div class="r" style="left:1452.20px;top:255.00px;width:2.20px;height:275.00px;background:#BDBDBD;"></div>
<div class="r" style="left:750.00px;top:532.00px;width:730.00px;height:8.40px;background:#B3B0AD;border-radius:4.2px;"></div>
<div class="r" style="left:1581.00px;top:223.50px;width:5.60px;height:88.50px;background:#A8A8A8;border-radius:2.8px;"></div>
<div class="r" style="left:142.00px;top:560.30px;width:1034.50px;height:390.50px;background:#fff;box-sizing:border-box;border:1px solid #8ABB45;border-radius:15px;box-shadow:0 0 18px 2px rgba(0,0,0,0.34);"></div>
<div class="r" style="left:154.40px;top:572.40px;width:965.80px;height:32.50px;background:#A9CF75;"></div>
<div class="clip" style="left:154px;top:605px;width:967px;height:312.8px;"><div style="position:absolute;left:-154px;top:-605px;width:1914px;height:1079px;">
<div class="r" style="left:154.40px;top:605.50px;width:965.80px;height:24.25px;background:#ECEFF0;"></div>
<div class="r" style="left:154.40px;top:628.75px;width:965.80px;height:1.00px;background:#E3E4E4;"></div>
<div class="r" style="left:603.00px;top:607.70px;width:79.30px;height:20.20px;background:#94C24F;"></div>
<div class="r" style="left:1076.40px;top:607.70px;width:37.80px;height:20.20px;background:#94C24F;"></div>
<span class="t" style="top:610.85px;font-size:15.3px;color:#252423;right:1509.40px;transform-origin:100% 50%;">46.015.716,93</span>
<span class="t" style="top:610.85px;font-size:15.3px;color:#252423;right:1374.50px;transform-origin:100% 50%;">46.388.914,43</span>
<span class="t" style="top:610.85px;font-size:15.3px;color:#252423;right:1232.20px;transform-origin:100% 50%;">373.197,00</span>
<span class="t" style="top:610.85px;font-size:15.3px;color:#252423;right:1069.60px;transform-origin:100% 50%;">51.970.803,10 €</span>
<span class="t" style="top:610.85px;font-size:15.3px;color:#252423;right:938.40px;transform-origin:100% 50%;">52.436.286,68 €</span>
<span class="t" style="top:610.85px;font-size:15.3px;color:#252423;right:800.20px;transform-origin:100% 50%;">465.483,00</span>
<svg style="left:555px;top:607.50px" width="19" height="20" viewBox="0 0 19 20"><path d="M9.5 1 L17.6 9 L15.6 11 L11 6.6 V19 H8 V6.6 L3.4 11 L1.4 9 Z" fill="#56B683" stroke="#2C7F52" stroke-width="0.9" stroke-linejoin="miter"/></svg>
<svg style="left:991px;top:607.50px" width="19" height="20" viewBox="0 0 19 20"><path d="M9.5 1 L17.6 9 L15.6 11 L11 6.6 V19 H8 V6.6 L3.4 11 L1.4 9 Z" fill="#56B683" stroke="#2C7F52" stroke-width="0.9" stroke-linejoin="miter"/></svg>
<div class="r" style="left:154.40px;top:629.75px;width:965.80px;height:24.25px;background:#fff;"></div>
<div class="r" style="left:154.40px;top:653.00px;width:965.80px;height:1.00px;background:#E3E4E4;"></div>
<div class="r" style="left:1076.40px;top:631.95px;width:0.90px;height:20.20px;background:#94C24F;"></div>
<span class="t" style="top:635.10px;font-size:15.3px;color:#252423;left:160.70px;transform-origin:0 50%;transform:scaleX(1.0322);">*DUMMY</span>
<span class="t" style="top:635.10px;font-size:15.3px;color:#252423;right:1509.40px;transform-origin:100% 50%;">80.720,00</span>
<span class="t" style="top:635.10px;font-size:15.3px;color:#252423;right:1374.50px;transform-origin:100% 50%;">80.720,00</span>
<span class="t" style="top:635.10px;font-size:15.3px;color:#252423;right:1232.20px;transform-origin:100% 50%;">0,00</span>
<span class="t" style="top:635.10px;font-size:15.3px;color:#252423;right:1069.60px;transform-origin:100% 50%;">58.496,41 €</span>
<span class="t" style="top:635.10px;font-size:15.3px;color:#252423;right:938.40px;transform-origin:100% 50%;">69.693,01 €</span>
<span class="t" style="top:635.10px;font-size:15.3px;color:#252423;right:800.20px;transform-origin:100% 50%;">11.196,00</span>
<svg style="left:554.6px;top:631.95px" width="20" height="19" viewBox="0 0 20 19"><path d="M19 9.5 L11 1.4 L9 3.4 L13.4 8 H1 V11 H13.4 L9 15.6 L11 17.6 Z" fill="#ABABAB" stroke="#757575" stroke-width="0.9" stroke-linejoin="miter"/></svg>
<svg style="left:991px;top:631.75px" width="19" height="20" viewBox="0 0 19 20"><path d="M9.5 1 L17.6 9 L15.6 11 L11 6.6 V19 H8 V6.6 L3.4 11 L1.4 9 Z" fill="#56B683" stroke="#2C7F52" stroke-width="0.9" stroke-linejoin="miter"/></svg>
<div class="r" style="left:154.40px;top:654.00px;width:965.80px;height:24.25px;background:#ECEFF0;"></div>
<div class="r" style="left:154.40px;top:677.25px;width:965.80px;height:1.00px;background:#E3E4E4;"></div>
<span class="t" style="top:659.35px;font-size:15.3px;color:#252423;left:160.70px;transform-origin:0 50%;transform:scaleX(1.0107);">170101002</span>
<span class="t" style="top:659.35px;font-size:15.3px;color:#252423;right:1509.40px;transform-origin:100% 50%;">0,00</span>
<span class="t" style="top:659.35px;font-size:15.3px;color:#252423;right:1374.50px;transform-origin:100% 50%;">0,00</span>
<span class="t" style="top:659.35px;font-size:15.3px;color:#252423;right:1232.20px;transform-origin:100% 50%;">0,00</span>
<span class="t" style="top:659.35px;font-size:15.3px;color:#252423;right:1069.60px;transform-origin:100% 50%;">0,00 €</span>
<span class="t" style="top:659.35px;font-size:15.3px;color:#252423;right:938.40px;transform-origin:100% 50%;">0,00 €</span>
<span class="t" style="top:659.35px;font-size:15.3px;color:#252423;right:800.20px;transform-origin:100% 50%;">0,00</span>
<svg style="left:554.6px;top:656.20px" width="20" height="19" viewBox="0 0 20 19"><path d="M19 9.5 L11 1.4 L9 3.4 L13.4 8 H1 V11 H13.4 L9 15.6 L11 17.6 Z" fill="#ABABAB" stroke="#757575" stroke-width="0.9" stroke-linejoin="miter"/></svg>
<svg style="left:990.6px;top:656.20px" width="20" height="19" viewBox="0 0 20 19"><path d="M19 9.5 L11 1.4 L9 3.4 L13.4 8 H1 V11 H13.4 L9 15.6 L11 17.6 Z" fill="#ABABAB" stroke="#757575" stroke-width="0.9" stroke-linejoin="miter"/></svg>
<div class="r" style="left:154.40px;top:678.25px;width:965.80px;height:24.25px;background:#fff;"></div>
<div class="r" style="left:154.40px;top:701.50px;width:965.80px;height:1.00px;background:#E3E4E4;"></div>
<span class="t" style="top:683.60px;font-size:15.3px;color:#252423;left:160.70px;transform-origin:0 50%;transform:scaleX(1.0107);">170101003</span>
<span class="t" style="top:683.60px;font-size:15.3px;color:#252423;right:1509.40px;transform-origin:100% 50%;">0,00</span>
<span class="t" style="top:683.60px;font-size:15.3px;color:#252423;right:1374.50px;transform-origin:100% 50%;">0,00</span>
<span class="t" style="top:683.60px;font-size:15.3px;color:#252423;right:1232.20px;transform-origin:100% 50%;">0,00</span>
<span class="t" style="top:683.60px;font-size:15.3px;color:#252423;right:1069.60px;transform-origin:100% 50%;">0,00 €</span>
<span class="t" style="top:683.60px;font-size:15.3px;color:#252423;right:938.40px;transform-origin:100% 50%;">0,00 €</span>
<span class="t" style="top:683.60px;font-size:15.3px;color:#252423;right:800.20px;transform-origin:100% 50%;">0,00</span>
<svg style="left:554.6px;top:680.45px" width="20" height="19" viewBox="0 0 20 19"><path d="M19 9.5 L11 1.4 L9 3.4 L13.4 8 H1 V11 H13.4 L9 15.6 L11 17.6 Z" fill="#ABABAB" stroke="#757575" stroke-width="0.9" stroke-linejoin="miter"/></svg>
<svg style="left:990.6px;top:680.45px" width="20" height="19" viewBox="0 0 20 19"><path d="M19 9.5 L11 1.4 L9 3.4 L13.4 8 H1 V11 H13.4 L9 15.6 L11 17.6 Z" fill="#ABABAB" stroke="#757575" stroke-width="0.9" stroke-linejoin="miter"/></svg>
<div class="r" style="left:154.40px;top:702.50px;width:965.80px;height:24.25px;background:#ECEFF0;"></div>
<div class="r" style="left:154.40px;top:725.75px;width:965.80px;height:1.00px;background:#E3E4E4;"></div>
<span class="t" style="top:707.85px;font-size:15.3px;color:#252423;left:160.70px;transform-origin:0 50%;transform:scaleX(1.0107);">170101004</span>
<span class="t" style="top:707.85px;font-size:15.3px;color:#252423;right:1509.40px;transform-origin:100% 50%;">0,00</span>
<span class="t" style="top:707.85px;font-size:15.3px;color:#252423;right:1374.50px;transform-origin:100% 50%;">0,00</span>
<span class="t" style="top:707.85px;font-size:15.3px;color:#252423;right:1232.20px;transform-origin:100% 50%;">0,00</span>
<span class="t" style="top:707.85px;font-size:15.3px;color:#252423;right:1069.60px;transform-origin:100% 50%;">0,00 €</span>
<span class="t" style="top:707.85px;font-size:15.3px;color:#252423;right:938.40px;transform-origin:100% 50%;">0,00 €</span>
<span class="t" style="top:707.85px;font-size:15.3px;color:#252423;right:800.20px;transform-origin:100% 50%;">0,00</span>
<svg style="left:554.6px;top:704.70px" width="20" height="19" viewBox="0 0 20 19"><path d="M19 9.5 L11 1.4 L9 3.4 L13.4 8 H1 V11 H13.4 L9 15.6 L11 17.6 Z" fill="#ABABAB" stroke="#757575" stroke-width="0.9" stroke-linejoin="miter"/></svg>
<svg style="left:990.6px;top:704.70px" width="20" height="19" viewBox="0 0 20 19"><path d="M19 9.5 L11 1.4 L9 3.4 L13.4 8 H1 V11 H13.4 L9 15.6 L11 17.6 Z" fill="#ABABAB" stroke="#757575" stroke-width="0.9" stroke-linejoin="miter"/></svg>
<div class="r" style="left:154.40px;top:726.75px;width:965.80px;height:24.25px;background:#fff;"></div>
<div class="r" style="left:154.40px;top:750.00px;width:965.80px;height:1.00px;background:#E3E4E4;"></div>
<span class="t" style="top:732.10px;font-size:15.3px;color:#252423;left:160.70px;transform-origin:0 50%;transform:scaleX(1.0107);">170102001</span>
<span class="t" style="top:732.10px;font-size:15.3px;color:#252423;right:1509.40px;transform-origin:100% 50%;">0,00</span>
<span class="t" style="top:732.10px;font-size:15.3px;color:#252423;right:1374.50px;transform-origin:100% 50%;">0,00</span>
<span class="t" style="top:732.10px;font-size:15.3px;color:#252423;right:1232.20px;transform-origin:100% 50%;">0,00</span>
<span class="t" style="top:732.10px;font-size:15.3px;color:#252423;right:1069.60px;transform-origin:100% 50%;">0,00 €</span>
<span class="t" style="top:732.10px;font-size:15.3px;color:#252423;right:938.40px;transform-origin:100% 50%;">0,00 €</span>
<span class="t" style="top:732.10px;font-size:15.3px;color:#252423;right:800.20px;transform-origin:100% 50%;">0,00</span>
<svg style="left:554.6px;top:728.95px" width="20" height="19" viewBox="0 0 20 19"><path d="M19 9.5 L11 1.4 L9 3.4 L13.4 8 H1 V11 H13.4 L9 15.6 L11 17.6 Z" fill="#ABABAB" stroke="#757575" stroke-width="0.9" stroke-linejoin="miter"/></svg>
<svg style="left:990.6px;top:728.95px" width="20" height="19" viewBox="0 0 20 19"><path d="M19 9.5 L11 1.4 L9 3.4 L13.4 8 H1 V11 H13.4 L9 15.6 L11 17.6 Z" fill="#ABABAB" stroke="#757575" stroke-width="0.9" stroke-linejoin="miter"/></svg>
<div class="r" style="left:154.40px;top:751.00px;width:965.80px;height:24.25px;background:#ECEFF0;"></div>
<div class="r" style="left:154.40px;top:774.25px;width:965.80px;height:1.00px;background:#E3E4E4;"></div>
<span class="t" style="top:756.35px;font-size:15.3px;color:#252423;left:160.70px;transform-origin:0 50%;transform:scaleX(1.0107);">170102002</span>
<span class="t" style="top:756.35px;font-size:15.3px;color:#252423;right:1509.40px;transform-origin:100% 50%;">0,00</span>
<span class="t" style="top:756.35px;font-size:15.3px;color:#252423;right:1374.50px;transform-origin:100% 50%;">0,00</span>
<span class="t" style="top:756.35px;font-size:15.3px;color:#252423;right:1232.20px;transform-origin:100% 50%;">0,00</span>
<span class="t" style="top:756.35px;font-size:15.3px;color:#252423;right:1069.60px;transform-origin:100% 50%;">0,00 €</span>
<span class="t" style="top:756.35px;font-size:15.3px;color:#252423;right:938.40px;transform-origin:100% 50%;">0,00 €</span>
<span class="t" style="top:756.35px;font-size:15.3px;color:#252423;right:800.20px;transform-origin:100% 50%;">0,00</span>
<svg style="left:554.6px;top:753.20px" width="20" height="19" viewBox="0 0 20 19"><path d="M19 9.5 L11 1.4 L9 3.4 L13.4 8 H1 V11 H13.4 L9 15.6 L11 17.6 Z" fill="#ABABAB" stroke="#757575" stroke-width="0.9" stroke-linejoin="miter"/></svg>
<svg style="left:990.6px;top:753.20px" width="20" height="19" viewBox="0 0 20 19"><path d="M19 9.5 L11 1.4 L9 3.4 L13.4 8 H1 V11 H13.4 L9 15.6 L11 17.6 Z" fill="#ABABAB" stroke="#757575" stroke-width="0.9" stroke-linejoin="miter"/></svg>
<div class="r" style="left:154.40px;top:775.25px;width:965.80px;height:24.25px;background:#fff;"></div>
<div class="r" style="left:154.40px;top:798.50px;width:965.80px;height:1.00px;background:#E3E4E4;"></div>
<span class="t" style="top:780.60px;font-size:15.3px;color:#252423;left:160.70px;transform-origin:0 50%;transform:scaleX(1.0107);">170103001</span>
<span class="t" style="top:780.60px;font-size:15.3px;color:#252423;right:1509.40px;transform-origin:100% 50%;">0,00</span>
<span class="t" style="top:780.60px;font-size:15.3px;color:#252423;right:1374.50px;transform-origin:100% 50%;">0,00</span>
<span class="t" style="top:780.60px;font-size:15.3px;color:#252423;right:1232.20px;transform-origin:100% 50%;">0,00</span>
<span class="t" style="top:780.60px;font-size:15.3px;color:#252423;right:1069.60px;transform-origin:100% 50%;">0,00 €</span>
<span class="t" style="top:780.60px;font-size:15.3px;color:#252423;right:938.40px;transform-origin:100% 50%;">0,00 €</span>
<span class="t" style="top:780.60px;font-size:15.3px;color:#252423;right:800.20px;transform-origin:100% 50%;">0,00</span>
<svg style="left:554.6px;top:777.45px" width="20" height="19" viewBox="0 0 20 19"><path d="M19 9.5 L11 1.4 L9 3.4 L13.4 8 H1 V11 H13.4 L9 15.6 L11 17.6 Z" fill="#ABABAB" stroke="#757575" stroke-width="0.9" stroke-linejoin="miter"/></svg>
<svg style="left:990.6px;top:777.45px" width="20" height="19" viewBox="0 0 20 19"><path d="M19 9.5 L11 1.4 L9 3.4 L13.4 8 H1 V11 H13.4 L9 15.6 L11 17.6 Z" fill="#ABABAB" stroke="#757575" stroke-width="0.9" stroke-linejoin="miter"/></svg>
<div class="r" style="left:154.40px;top:799.50px;width:965.80px;height:24.25px;background:#ECEFF0;"></div>
<div class="r" style="left:154.40px;top:822.75px;width:965.80px;height:1.00px;background:#E3E4E4;"></div>
<span class="t" style="top:804.85px;font-size:15.3px;color:#252423;left:160.70px;transform-origin:0 50%;transform:scaleX(1.0107);">170104001</span>
<span class="t" style="top:804.85px;font-size:15.3px;color:#252423;right:1509.40px;transform-origin:100% 50%;">0,00</span>
<span class="t" style="top:804.85px;font-size:15.3px;color:#252423;right:1374.50px;transform-origin:100% 50%;">0,00</span>
<span class="t" style="top:804.85px;font-size:15.3px;color:#252423;right:1232.20px;transform-origin:100% 50%;">0,00</span>
<span class="t" style="top:804.85px;font-size:15.3px;color:#252423;right:1069.60px;transform-origin:100% 50%;">0,00 €</span>
<span class="t" style="top:804.85px;font-size:15.3px;color:#252423;right:938.40px;transform-origin:100% 50%;">0,00 €</span>
<span class="t" style="top:804.85px;font-size:15.3px;color:#252423;right:800.20px;transform-origin:100% 50%;">0,00</span>
<svg style="left:554.6px;top:801.70px" width="20" height="19" viewBox="0 0 20 19"><path d="M19 9.5 L11 1.4 L9 3.4 L13.4 8 H1 V11 H13.4 L9 15.6 L11 17.6 Z" fill="#ABABAB" stroke="#757575" stroke-width="0.9" stroke-linejoin="miter"/></svg>
<svg style="left:990.6px;top:801.70px" width="20" height="19" viewBox="0 0 20 19"><path d="M19 9.5 L11 1.4 L9 3.4 L13.4 8 H1 V11 H13.4 L9 15.6 L11 17.6 Z" fill="#ABABAB" stroke="#757575" stroke-width="0.9" stroke-linejoin="miter"/></svg>
<div class="r" style="left:154.40px;top:823.75px;width:965.80px;height:24.25px;background:#fff;"></div>
<div class="r" style="left:154.40px;top:847.00px;width:965.80px;height:1.00px;background:#E3E4E4;"></div>
<span class="t" style="top:829.10px;font-size:15.3px;color:#252423;left:160.70px;transform-origin:0 50%;transform:scaleX(1.0107);">170104002</span>
<span class="t" style="top:829.10px;font-size:15.3px;color:#252423;right:1509.40px;transform-origin:100% 50%;">0,00</span>
<span class="t" style="top:829.10px;font-size:15.3px;color:#252423;right:1374.50px;transform-origin:100% 50%;">0,00</span>
<span class="t" style="top:829.10px;font-size:15.3px;color:#252423;right:1232.20px;transform-origin:100% 50%;">0,00</span>
<span class="t" style="top:829.10px;font-size:15.3px;color:#252423;right:1069.60px;transform-origin:100% 50%;">0,00 €</span>
<span class="t" style="top:829.10px;font-size:15.3px;color:#252423;right:938.40px;transform-origin:100% 50%;">0,00 €</span>
<span class="t" style="top:829.10px;font-size:15.3px;color:#252423;right:800.20px;transform-origin:100% 50%;">0,00</span>
<svg style="left:554.6px;top:825.95px" width="20" height="19" viewBox="0 0 20 19"><path d="M19 9.5 L11 1.4 L9 3.4 L13.4 8 H1 V11 H13.4 L9 15.6 L11 17.6 Z" fill="#ABABAB" stroke="#757575" stroke-width="0.9" stroke-linejoin="miter"/></svg>
<svg style="left:990.6px;top:825.95px" width="20" height="19" viewBox="0 0 20 19"><path d="M19 9.5 L11 1.4 L9 3.4 L13.4 8 H1 V11 H13.4 L9 15.6 L11 17.6 Z" fill="#ABABAB" stroke="#757575" stroke-width="0.9" stroke-linejoin="miter"/></svg>
<div class="r" style="left:154.40px;top:848.00px;width:965.80px;height:24.25px;background:#ECEFF0;"></div>
<div class="r" style="left:154.40px;top:871.25px;width:965.80px;height:1.00px;background:#E3E4E4;"></div>
<span class="t" style="top:853.35px;font-size:15.3px;color:#252423;left:160.70px;transform-origin:0 50%;transform:scaleX(1.0107);">170105001</span>
<span class="t" style="top:853.35px;font-size:15.3px;color:#252423;right:1509.40px;transform-origin:100% 50%;">0,00</span>
<span class="t" style="top:853.35px;font-size:15.3px;color:#252423;right:1374.50px;transform-origin:100% 50%;">0,00</span>
<span class="t" style="top:853.35px;font-size:15.3px;color:#252423;right:1232.20px;transform-origin:100% 50%;">0,00</span>
<span class="t" style="top:853.35px;font-size:15.3px;color:#252423;right:1069.60px;transform-origin:100% 50%;">0,00 €</span>
<span class="t" style="top:853.35px;font-size:15.3px;color:#252423;right:938.40px;transform-origin:100% 50%;">0,00 €</span>
<span class="t" style="top:853.35px;font-size:15.3px;color:#252423;right:800.20px;transform-origin:100% 50%;">0,00</span>
<svg style="left:554.6px;top:850.20px" width="20" height="19" viewBox="0 0 20 19"><path d="M19 9.5 L11 1.4 L9 3.4 L13.4 8 H1 V11 H13.4 L9 15.6 L11 17.6 Z" fill="#ABABAB" stroke="#757575" stroke-width="0.9" stroke-linejoin="miter"/></svg>
<svg style="left:990.6px;top:850.20px" width="20" height="19" viewBox="0 0 20 19"><path d="M19 9.5 L11 1.4 L9 3.4 L13.4 8 H1 V11 H13.4 L9 15.6 L11 17.6 Z" fill="#ABABAB" stroke="#757575" stroke-width="0.9" stroke-linejoin="miter"/></svg>
<div class="r" style="left:154.40px;top:872.25px;width:965.80px;height:24.25px;background:#fff;"></div>
<div class="r" style="left:154.40px;top:895.50px;width:965.80px;height:1.00px;background:#E3E4E4;"></div>
<span class="t" style="top:877.60px;font-size:15.3px;color:#252423;left:160.70px;transform-origin:0 50%;transform:scaleX(1.0107);">170106002</span>
<span class="t" style="top:877.60px;font-size:15.3px;color:#252423;right:1509.40px;transform-origin:100% 50%;">0,00</span>
<span class="t" style="top:877.60px;font-size:15.3px;color:#252423;right:1374.50px;transform-origin:100% 50%;">0,00</span>
<span class="t" style="top:877.60px;font-size:15.3px;color:#252423;right:1232.20px;transform-origin:100% 50%;">0,00</span>
<span class="t" style="top:877.60px;font-size:15.3px;color:#252423;right:1069.60px;transform-origin:100% 50%;">0,00 €</span>
<span class="t" style="top:877.60px;font-size:15.3px;color:#252423;right:938.40px;transform-origin:100% 50%;">0,00 €</span>
<span class="t" style="top:877.60px;font-size:15.3px;color:#252423;right:800.20px;transform-origin:100% 50%;">0,00</span>
<svg style="left:554.6px;top:874.45px" width="20" height="19" viewBox="0 0 20 19"><path d="M19 9.5 L11 1.4 L9 3.4 L13.4 8 H1 V11 H13.4 L9 15.6 L11 17.6 Z" fill="#ABABAB" stroke="#757575" stroke-width="0.9" stroke-linejoin="miter"/></svg>
<svg style="left:990.6px;top:874.45px" width="20" height="19" viewBox="0 0 20 19"><path d="M19 9.5 L11 1.4 L9 3.4 L13.4 8 H1 V11 H13.4 L9 15.6 L11 17.6 Z" fill="#ABABAB" stroke="#757575" stroke-width="0.9" stroke-linejoin="miter"/></svg>
<div class="r" style="left:154.40px;top:896.50px;width:965.80px;height:24.25px;background:#ECEFF0;"></div>
<div class="r" style="left:154.40px;top:919.75px;width:965.80px;height:1.00px;background:#E3E4E4;"></div>
<span class="t" style="top:901.85px;font-size:15.3px;color:#252423;left:160.70px;transform-origin:0 50%;transform:scaleX(1.0107);">170106003</span>
<span class="t" style="top:901.85px;font-size:15.3px;color:#252423;right:1509.40px;transform-origin:100% 50%;">0,00</span>
<span class="t" style="top:901.85px;font-size:15.3px;color:#252423;right:1374.50px;transform-origin:100% 50%;">0,00</span>
<span class="t" style="top:901.85px;font-size:15.3px;color:#252423;right:1232.20px;transform-origin:100% 50%;">0,00</span>
<span class="t" style="top:901.85px;font-size:15.3px;color:#252423;right:1069.60px;transform-origin:100% 50%;">0,00 €</span>
<span class="t" style="top:901.85px;font-size:15.3px;color:#252423;right:938.40px;transform-origin:100% 50%;">0,00 €</span>
<span class="t" style="top:901.85px;font-size:15.3px;color:#252423;right:800.20px;transform-origin:100% 50%;">0,00</span>
<svg style="left:554.6px;top:898.70px" width="20" height="19" viewBox="0 0 20 19"><path d="M19 9.5 L11 1.4 L9 3.4 L13.4 8 H1 V11 H13.4 L9 15.6 L11 17.6 Z" fill="#ABABAB" stroke="#757575" stroke-width="0.9" stroke-linejoin="miter"/></svg>
<svg style="left:990.6px;top:898.70px" width="20" height="19" viewBox="0 0 20 19"><path d="M19 9.5 L11 1.4 L9 3.4 L13.4 8 H1 V11 H13.4 L9 15.6 L11 17.6 Z" fill="#ABABAB" stroke="#757575" stroke-width="0.9" stroke-linejoin="miter"/></svg>
<div class="r" style="left:602.40px;top:605.00px;width:1.00px;height:313.00px;background:transparent;border-left:1px dashed #000;box-sizing:border-box;"></div>
<div class="r" style="left:1075.80px;top:605.00px;width:1.00px;height:313.00px;background:transparent;border-left:1px dashed #000;box-sizing:border-box;"></div>
</div></div>
<div class="r" style="left:154.40px;top:917.80px;width:965.80px;height:23.00px;background:#fff;"></div>
<span class="t" style="top:923.33px;font-size:15.2px;color:#000;font-weight:bold;left:160.70px;transform-origin:0 50%;transform:scaleX(1.0176);">Gesamt</span>
<span class="t" style="top:920.50px;font-size:16.2px;color:#111;font-family:'Liberation Serif', serif;font-weight:bold;right:1509.40px;transform-origin:100% 50%;">76.692.861,56</span>
<span class="t" style="top:920.50px;font-size:16.2px;color:#111;font-family:'Liberation Serif', serif;font-weight:bold;right:1374.50px;transform-origin:100% 50%;">77.314.857,38</span>
<span class="t" style="top:920.50px;font-size:16.2px;color:#111;font-family:'Liberation Serif', serif;font-weight:bold;right:1232.20px;transform-origin:100% 50%;">621.995,00</span>
<span class="t" style="top:920.50px;font-size:16.2px;color:#111;font-family:'Liberation Serif', serif;font-weight:bold;right:1069.60px;transform-origin:100% 50%;">86.618.005,20 €</span>
<span class="t" style="top:920.50px;font-size:16.2px;color:#111;font-family:'Liberation Serif', serif;font-weight:bold;right:938.40px;transform-origin:100% 50%;">87.393.811,17 €</span>
<span class="t" style="top:920.50px;font-size:16.2px;color:#111;font-family:'Liberation Serif', serif;font-weight:bold;right:800.20px;transform-origin:100% 50%;">775.805,00</span>
<span class="t" style="top:577.05px;font-size:15.3px;color:#252423;left:160.70px;transform-origin:0 50%;transform:scaleX(1.0026);">Charge</span>
<span class="t" style="top:577.05px;font-size:15.3px;color:#252423;left:254.50px;transform-origin:0 50%;transform:scaleX(1.0186);">Anfangsbestand LME</span>
<span class="t" style="top:577.05px;font-size:15.3px;color:#252423;left:420.30px;transform-origin:0 50%;transform:scaleX(1.0080);">Endbestand LME</span>
<span class="t" style="top:577.05px;font-size:15.3px;color:#252423;left:555.20px;transform-origin:0 50%;transform:scaleX(1.0194);">Veränderung LME</span>
<span class="t" style="top:577.05px;font-size:15.3px;color:#252423;left:697.00px;transform-origin:0 50%;transform:scaleX(1.0405);">Anfangsbestand HW</span>
<span class="t" style="top:577.05px;font-size:15.3px;color:#252423;left:859.80px;transform-origin:0 50%;transform:scaleX(1.0270);">Endbestand HW</span>
<span class="t" style="top:577.05px;font-size:15.3px;color:#252423;left:990.50px;transform-origin:0 50%;transform:scaleX(1.0465);">Veränderung HW</span>
<div class="r" style="left:245.60px;top:572.40px;width:2.40px;height:32.50px;background:#A8AFA0;"></div>
<div class="r" style="left:245.60px;top:605.00px;width:2.40px;height:336.00px;background:#DADEE2;"></div>
<div class="r" style="left:411.80px;top:572.40px;width:2.40px;height:32.50px;background:#A8AFA0;"></div>
<div class="r" style="left:411.80px;top:605.00px;width:2.40px;height:336.00px;background:#C2C2C2;"></div>
<div class="r" style="left:546.40px;top:572.40px;width:2.40px;height:32.50px;background:#A8AFA0;"></div>
<div class="r" style="left:546.40px;top:605.00px;width:2.40px;height:336.00px;background:#C2C2C2;"></div>
<div class="r" style="left:688.60px;top:572.40px;width:2.40px;height:32.50px;background:#A8AFA0;"></div>
<div class="r" style="left:688.60px;top:605.00px;width:2.40px;height:336.00px;background:#C2C2C2;"></div>
<div class="r" style="left:850.90px;top:572.40px;width:2.40px;height:32.50px;background:#A8AFA0;"></div>
<div class="r" style="left:850.90px;top:605.00px;width:2.40px;height:336.00px;background:#C2C2C2;"></div>
<div class="r" style="left:981.90px;top:572.40px;width:2.40px;height:32.50px;background:#A8AFA0;"></div>
<div class="r" style="left:981.90px;top:605.00px;width:2.40px;height:336.00px;background:#C2C2C2;"></div>
<div class="r" style="left:1157.30px;top:573.50px;width:6.60px;height:9.20px;background:#9E9E9E;border-radius:3px;"></div>
<div class="r" style="left:1192.00px;top:560.30px;width:407.50px;height:390.50px;background:#fff;box-sizing:border-box;border:1px solid #8ABB45;border-radius:15px;box-shadow:0 0 18px 2px rgba(0,0,0,0.34);"></div>
<span class="t" style="top:572.05px;font-size:21.2px;color:#111;left:1204.50px;transform-origin:0 50%;transform:scaleX(1.0452);">Standorte nach Charge</span>
<div class="clip" style="left:1203.8px;top:602px;width:386.5px;height:338.7px;background:#E9E9E9;"><div style="position:absolute;left:-1203.8px;top:-602px;width:1914px;height:1079px;">
<svg style="left:0;top:0" width="1914" height="1079"><g fill="none" stroke-linecap="round" stroke-linejoin="round"><path d="M1204.0 748.9 C1206.0 750.5 1210.1 755.1 1216.2 758.6 C1222.3 762.1 1235.1 766.8 1240.5 770.0 C1245.9 773.2 1243.3 774.8 1248.7 777.7 C1254.1 780.6 1263.5 785.3 1273.0 787.5 C1282.5 789.7 1297.3 790.4 1305.4 790.7 C1313.5 791.0 1315.5 791.3 1321.7 789.1 C1327.9 786.9 1338.1 781.2 1342.7 777.7 C1347.3 774.2 1347.6 772.0 1349.2 768.0 C1350.8 764.0 1352.0 756.1 1352.5 753.7" stroke="#DEDEDE" stroke-width="5"/><path d="M1204.0 748.9 C1206.0 750.5 1210.1 755.1 1216.2 758.6 C1222.3 762.1 1235.1 766.8 1240.5 770.0 C1245.9 773.2 1243.3 774.8 1248.7 777.7 C1254.1 780.6 1263.5 785.3 1273.0 787.5 C1282.5 789.7 1297.3 790.4 1305.4 790.7 C1313.5 791.0 1315.5 791.3 1321.7 789.1 C1327.9 786.9 1338.1 781.2 1342.7 777.7 C1347.3 774.2 1348.1 769.6 1349.2 768.0" stroke="#CFCFCF" stroke-width="1.6"/><path d="M1398.0 602.0 C1396.6 604.0 1391.7 606.8 1389.8 614.2 C1387.9 621.7 1387.8 637.2 1386.5 646.7 C1385.2 656.2 1383.0 661.5 1381.7 671.0 C1380.4 680.5 1380.6 695.0 1378.4 703.4 C1376.2 711.8 1372.5 715.3 1368.7 721.3 C1364.9 727.2 1358.4 733.7 1355.7 739.1 C1353.0 744.5 1353.8 748.1 1352.5 753.7 C1351.2 759.4 1351.3 766.6 1347.6 773.0 C1343.8 779.4 1337.0 786.9 1330.0 792.0 C1323.0 797.1 1311.9 797.4 1305.4 803.7 C1298.9 810.0 1295.4 821.5 1290.8 829.6 C1286.2 837.7 1281.7 845.0 1277.9 852.3 C1274.1 859.6 1270.3 866.4 1268.1 873.4 C1265.9 880.4 1266.8 888.5 1264.9 894.5 C1263.0 900.5 1260.9 905.3 1256.8 909.1 C1252.7 912.9 1245.9 914.8 1240.5 917.2 C1235.1 919.6 1229.0 920.2 1224.3 923.7 C1219.5 927.2 1215.4 935.2 1212.0 938.3 C1208.6 941.3 1205.3 941.4 1204.0 942.0" stroke="#D3D3D3" stroke-width="3.2"/><path d="M1395.0 646.7 C1399.6 648.6 1414.8 653.1 1422.6 658.0 C1430.4 662.9 1438.0 671.3 1442.0 675.9 C1446.0 680.5 1446.1 681.0 1446.9 685.6 C1447.7 690.2 1449.1 696.4 1446.9 703.4 C1444.7 710.4 1437.7 718.3 1433.9 727.8 C1430.1 737.3 1425.8 754.8 1424.2 760.2" stroke="#D6D6D6" stroke-width="1.2"/><path d="M1417.7 842.6 C1416.6 848.5 1411.7 867.8 1411.2 878.3 C1410.7 888.8 1415.3 895.6 1414.5 905.9 C1413.7 916.2 1407.8 934.2 1406.4 939.9" stroke="#DDDDDD" stroke-width="1.1"/><path d="M1378.0 668.0 C1376.0 671.7 1367.0 683.7 1366.0 690.0 C1365.0 696.3 1373.0 701.0 1372.0 706.0 C1371.0 711.0 1362.0 717.7 1360.0 720.0" stroke="#D8D8D8" stroke-width="1.1"/><path d="M1284.3 602.0 C1283.9 606.2 1281.9 619.8 1281.9 627.2 C1281.9 634.7 1283.6 640.2 1284.3 646.7 C1285.0 653.2 1284.6 660.2 1286.0 666.1 C1287.4 672.0 1290.3 675.8 1292.5 682.3 C1294.7 688.8 1295.7 699.6 1298.9 705.0 C1302.1 710.4 1310.0 711.0 1311.9 714.8 C1313.8 718.6 1311.1 723.5 1310.3 727.8 C1309.5 732.1 1307.4 735.8 1307.0 740.7 C1306.6 745.6 1309.0 751.6 1307.9 757.0 C1306.8 762.4 1302.6 768.5 1300.6 773.0 C1298.6 777.5 1296.8 782.2 1296.0 784.0" stroke="#FAFAFA" stroke-width="2.2"/><path d="M1311.9 718.0 C1313.8 721.8 1320.3 736.4 1323.3 740.7 C1326.3 745.0 1324.4 742.5 1329.8 744.0 C1335.2 745.5 1350.0 748.4 1355.7 749.7 C1361.4 751.1 1361.4 750.1 1363.8 752.1 C1366.2 754.1 1367.6 758.8 1370.3 761.8 C1373.0 764.8 1376.4 767.3 1380.0 770.0 C1383.6 772.7 1390.0 776.7 1392.0 778.0" stroke="#FAFAFA" stroke-width="2.6"/><path d="M1352.5 602.9 C1347.6 604.1 1333.6 607.0 1323.3 610.2 C1313.0 613.4 1297.7 619.5 1290.8 622.3 C1283.9 625.1 1283.4 626.4 1281.9 627.2" stroke="#FAFAFA" stroke-width="1.5"/><path d="M1363.8 602.0 C1364.3 603.8 1365.1 610.0 1367.0 612.6 C1368.9 615.2 1374.7 613.2 1375.2 617.5 C1375.8 621.8 1373.5 633.7 1370.3 638.6 C1367.0 643.5 1358.7 642.7 1355.7 646.7 C1352.7 650.8 1352.9 654.8 1352.5 662.9 C1352.1 671.0 1353.8 687.2 1353.3 695.3 C1352.8 703.4 1351.2 705.3 1349.2 711.5 C1347.2 717.7 1342.7 728.5 1341.1 732.6 C1339.5 736.7 1339.8 735.4 1339.5 735.9" stroke="#FAFAFA" stroke-width="3.0"/><path d="M1204.0 662.9 C1206.6 663.4 1215.8 663.9 1219.5 666.1 C1223.2 668.3 1225.2 671.6 1226.0 675.9 C1226.8 680.2 1224.5 687.2 1224.3 692.1 C1224.1 697.0 1226.4 702.3 1225.1 705.0 C1223.8 707.7 1219.7 708.6 1216.2 708.3 C1212.7 708.0 1206.0 704.2 1204.0 703.4" stroke="#FAFAFA" stroke-width="1.8"/><path d="M1225.1 705.0 C1233.1 705.8 1264.8 707.4 1273.0 709.9 C1281.2 712.4 1273.2 717.0 1274.6 719.7 C1275.9 722.4 1278.4 725.0 1281.1 726.1 C1283.8 727.2 1285.9 727.5 1290.8 726.1 C1295.7 724.8 1307.0 719.4 1310.3 718.0" stroke="#FAFAFA" stroke-width="1.8"/><path d="M1224.3 701.8 C1226.5 700.4 1232.4 697.0 1237.3 693.7 C1242.2 690.5 1247.8 686.6 1253.5 682.3 C1259.2 678.0 1268.4 671.5 1271.4 667.7 C1274.4 663.9 1271.4 661.0 1271.4 659.6" stroke="#FAFAFA" stroke-width="1.8"/><path d="M1204.0 721.3 C1205.0 720.8 1206.3 719.6 1209.7 718.0 C1213.1 716.4 1221.9 712.6 1224.3 711.5" stroke="#FAFAFA" stroke-width="1.5"/><path d="M1208.0 632.0 C1210.0 631.3 1215.3 628.5 1220.0 628.0 C1224.7 627.5 1233.3 628.8 1236.0 629.0" stroke="#FAFAFA" stroke-width="1.5"/><path d="M1400.0 701.8 C1399.1 706.1 1397.6 722.1 1394.6 727.8 C1391.5 733.5 1384.4 732.1 1381.7 735.9 C1379.0 739.7 1379.0 748.1 1378.4 750.5" stroke="#FAFAFA" stroke-width="2.2"/><path d="M1485.0 619.1 C1485.0 620.5 1486.5 622.1 1485.0 627.2 C1483.5 632.3 1479.2 642.1 1476.1 649.9 C1473.0 657.7 1469.1 665.6 1466.4 674.2 C1463.7 682.9 1462.9 693.9 1459.9 701.8 C1456.9 709.6 1452.5 714.3 1448.5 721.3 C1444.5 728.3 1439.4 735.4 1435.6 744.0 C1431.8 752.6 1428.7 766.3 1425.8 773.0 C1422.9 779.7 1419.3 782.2 1418.0 784.0" stroke="#FAFAFA" stroke-width="3.0"/><path d="M1513.4 602.0 C1512.6 604.0 1509.8 608.7 1508.5 614.2 C1507.2 619.8 1506.4 628.5 1505.3 635.3 C1504.2 642.1 1503.6 648.8 1502.0 654.8 C1500.4 660.8 1498.3 666.7 1495.6 671.0 C1492.9 675.3 1489.6 676.1 1485.8 680.7 C1482.0 685.3 1477.2 691.8 1472.9 698.6 C1468.6 705.4 1463.4 713.7 1459.9 721.3 C1456.4 728.9 1454.5 737.5 1451.8 744.0 C1449.1 750.5 1446.3 755.2 1443.7 760.2 C1441.1 765.2 1437.3 771.7 1436.0 774.0" stroke="#FAFAFA" stroke-width="2.2"/><path d="M1505.3 636.1 C1508.5 635.1 1518.8 632.7 1524.8 630.4 C1530.8 628.1 1535.0 624.4 1541.0 622.3 C1547.0 620.1 1556.5 619.6 1560.5 617.5 C1564.5 615.4 1563.1 610.2 1565.3 609.4 C1567.5 608.6 1569.3 612.6 1573.4 612.6 C1577.5 612.6 1587.2 609.9 1590.0 609.4" stroke="#FAFAFA" stroke-width="2.2"/><path d="M1547.5 609.4 L1560.5 615.8" stroke="#FAFAFA" stroke-width="1.5"/><path d="M1440.4 602.0 C1440.0 605.4 1437.6 615.9 1438.0 622.3 C1438.4 628.7 1442.5 635.1 1442.9 640.2 C1443.3 645.3 1440.8 651.0 1440.4 653.1" stroke="#FAFAFA" stroke-width="1.8"/><path d="M1443.7 669.4 C1444.5 670.2 1445.5 673.4 1448.5 674.2 C1451.5 675.0 1459.3 674.2 1461.5 674.2" stroke="#FAFAFA" stroke-width="1.8"/><path d="M1485.8 698.6 C1488.0 699.1 1495.5 698.6 1498.8 701.8 C1502.0 705.0 1503.4 713.7 1505.3 718.0 C1507.2 722.3 1509.9 724.8 1510.2 727.8 C1510.5 730.8 1506.1 733.2 1506.9 735.9 C1507.7 738.6 1513.7 741.3 1515.0 744.0 C1516.3 746.7 1515.0 750.8 1515.0 752.1" stroke="#FAFAFA" stroke-width="1.9"/><path d="M1590.0 696.9 C1587.2 699.3 1578.9 706.4 1573.4 711.5 C1567.9 716.6 1562.6 722.6 1557.2 727.8 C1551.8 732.9 1545.0 740.5 1541.0 742.4 C1537.0 744.3 1534.2 739.6 1532.9 739.1" stroke="#FAFAFA" stroke-width="1.9"/><path d="M1451.8 773.0 C1453.7 771.1 1459.6 764.5 1463.1 761.8 C1466.6 759.1 1469.7 756.7 1472.9 757.0 C1476.2 757.3 1477.2 763.0 1482.6 763.5 C1488.0 764.0 1499.9 762.1 1505.3 760.2 C1510.7 758.3 1513.4 753.5 1515.0 752.1" stroke="#FAFAFA" stroke-width="1.9"/><path d="M1529.0 753.0 L1531.0 762.0" stroke="#FAFAFA" stroke-width="1.5"/><path d="M1541.0 757.0 C1543.2 758.1 1551.3 761.3 1554.0 763.5 C1556.7 765.7 1556.5 768.9 1557.0 770.0" stroke="#FAFAFA" stroke-width="1.5"/><path d="M1407.2 698.6 C1406.0 701.3 1401.9 709.1 1399.9 714.8 C1397.9 720.5 1395.8 729.6 1395.0 732.6" stroke="#FAFAFA" stroke-width="2.2"/><path d="M1414.0 678.0 L1429.0 681.5" stroke="#FAFAFA" stroke-width="1.5"/><path d="M1456.0 703.5 C1453.4 703.8 1446.5 701.0 1440.4 705.0 C1434.3 709.0 1422.8 721.3 1419.3 727.8 C1415.8 734.3 1419.8 738.6 1419.3 744.0 C1418.8 749.4 1416.6 757.5 1416.1 760.2" stroke="#FAFAFA" stroke-width="1.8"/><ellipse cx="1404.5" cy="789" rx="9.5" ry="11" stroke="#FAFAFA" stroke-width="3"/><path d="M1392.0 778.0 L1399.0 781.0" stroke="#FAFAFA" stroke-width="2.2"/><path d="M1411.0 781.0 C1413.3 780.0 1420.1 776.5 1425.0 775.0 C1429.9 773.5 1436.5 772.4 1440.4 772.0 C1444.3 771.6 1447.2 772.8 1448.5 772.9" stroke="#FAFAFA" stroke-width="2.2"/><path d="M1384.0 782.0 C1384.3 784.3 1384.7 792.5 1386.0 796.0 C1387.3 799.5 1389.7 802.3 1392.0 803.0 C1394.3 803.7 1398.7 800.8 1400.0 800.4" stroke="#FAFAFA" stroke-width="1.9"/><path d="M1411.2 795.0 C1413.9 796.1 1423.3 799.0 1427.4 801.5 C1431.5 804.0 1432.5 807.5 1435.6 810.2 C1438.7 813.0 1442.0 816.4 1446.0 818.0 C1450.0 819.6 1455.4 819.3 1459.9 819.9 C1464.4 820.5 1469.7 820.4 1472.9 821.5 C1476.1 822.6 1474.7 824.2 1479.3 826.4 C1483.9 828.6 1493.4 832.9 1500.4 834.5 C1507.4 836.1 1515.5 836.6 1521.5 836.1 C1527.5 835.6 1531.5 832.9 1536.1 831.3 C1540.7 829.7 1545.6 826.1 1549.1 826.4 C1552.6 826.7 1554.5 829.1 1557.2 832.9 C1559.9 836.7 1563.1 843.1 1565.3 849.1 C1567.5 855.1 1566.1 862.7 1570.2 868.6 C1574.3 874.5 1586.7 882.1 1590.0 884.8" stroke="#FAFAFA" stroke-width="3.0"/><path d="M1448.5 772.9 C1449.3 773.7 1451.2 775.0 1453.4 777.7 C1455.6 780.4 1460.4 786.1 1461.5 789.1 C1462.6 792.1 1458.3 792.1 1459.9 795.6 C1461.5 799.1 1468.5 806.7 1471.2 810.2 C1473.9 813.7 1474.5 815.1 1476.1 816.7 C1477.7 818.3 1480.2 819.4 1481.0 819.9" stroke="#FAFAFA" stroke-width="2.0"/><path d="M1538.6 777.7 C1539.0 781.5 1541.2 793.1 1541.0 800.4 C1540.8 807.7 1538.5 816.1 1537.7 821.5 C1536.9 826.9 1536.4 831.0 1536.1 832.9" stroke="#FAFAFA" stroke-width="1.8"/><path d="M1557.2 772.9 C1558.5 774.5 1561.2 780.7 1565.3 782.6 C1569.3 784.5 1577.4 783.4 1581.5 784.2 C1585.6 785.0 1588.6 787.0 1590.0 787.5" stroke="#FAFAFA" stroke-width="1.8"/><path d="M1590.0 816.7 C1587.2 817.5 1578.3 819.1 1573.4 821.5 C1568.5 823.9 1564.5 828.9 1560.5 831.3 C1556.5 833.7 1551.0 835.3 1549.1 836.1" stroke="#FAFAFA" stroke-width="1.8"/><path d="M1508.5 855.6 C1507.4 857.2 1503.6 862.9 1502.0 865.3 C1500.4 867.7 1501.2 868.6 1498.8 870.2 C1496.4 871.8 1490.5 873.5 1487.5 875.1 C1484.5 876.7 1481.8 878.3 1481.0 879.9 C1480.2 881.5 1482.3 884.0 1482.6 884.8" stroke="#FAFAFA" stroke-width="1.9"/><path d="M1476.1 901.0 C1475.8 903.2 1474.8 909.1 1474.5 914.0 C1474.2 918.9 1474.2 925.5 1474.5 930.2 C1474.8 934.9 1475.8 940.0 1476.0 942.0" stroke="#FAFAFA" stroke-width="1.5"/><path d="M1518.3 883.2 C1520.7 884.8 1529.9 889.1 1532.9 892.9 C1535.9 896.7 1534.8 901.0 1536.1 905.9 C1537.4 910.8 1539.9 916.4 1541.0 922.1 C1542.1 927.8 1542.3 936.9 1542.6 939.9" stroke="#FAFAFA" stroke-width="1.7"/><path d="M1517.0 858.0 C1517.5 858.8 1518.2 862.7 1520.0 863.0 C1521.8 863.3 1526.7 860.5 1528.0 860.0" stroke="#FAFAFA" stroke-width="1.5"/><path d="M1529.0 862.0 C1531.8 863.3 1542.7 867.0 1546.0 870.0 C1549.3 873.0 1545.7 876.8 1549.0 880.0 C1552.3 883.2 1561.8 885.3 1566.0 889.0 C1570.2 892.7 1570.3 898.2 1574.0 902.0 C1577.7 905.8 1585.7 910.3 1588.0 912.0" stroke="#DCDCDC" stroke-width="1.0"/><path d="M1305.4 805.3 C1301.4 809.1 1286.8 824.0 1281.1 828.0 C1275.4 832.0 1275.7 826.6 1271.4 829.6 C1267.1 832.6 1260.1 838.9 1255.2 845.9 C1250.3 852.9 1248.2 864.8 1242.2 871.8 C1236.2 878.8 1225.9 882.3 1219.5 888.0 C1213.1 893.7 1206.6 902.9 1204.0 905.9" stroke="#FAFAFA" stroke-width="2.2"/><path d="M1204.0 896.0 C1205.5 895.8 1208.7 897.2 1213.0 894.5 C1217.3 891.8 1224.8 883.8 1230.0 880.0 C1235.2 876.2 1241.7 873.3 1244.0 872.0" stroke="#FAFAFA" stroke-width="1.5"/><path d="M1344.4 811.8 C1343.3 815.3 1340.3 826.7 1337.9 832.9 C1335.5 839.1 1332.5 844.2 1329.8 849.1 C1327.1 854.0 1323.3 856.7 1321.7 862.1 C1320.1 867.5 1321.9 876.4 1320.0 881.5 C1318.1 886.6 1315.2 888.6 1310.3 892.9 C1305.4 897.2 1296.2 904.0 1290.8 907.5 C1285.4 911.0 1286.3 910.2 1277.9 914.0 C1269.5 917.8 1248.6 925.8 1240.5 930.2 C1232.4 934.7 1231.1 939.0 1229.2 940.7" stroke="#FAFAFA" stroke-width="2.2"/><path d="M1400.0 800.4 C1396.4 803.9 1383.1 816.1 1378.4 821.5 C1373.7 826.9 1374.7 829.9 1372.0 832.9 C1369.3 835.9 1367.6 835.6 1362.2 839.4 C1356.8 843.2 1345.5 852.4 1339.5 855.6 C1333.5 858.8 1329.5 857.4 1326.5 858.8 C1323.5 860.1 1322.5 862.9 1321.7 863.7" stroke="#FAFAFA" stroke-width="2.5"/><path d="M1362.0 842.6 C1358.5 845.3 1346.3 854.5 1341.0 858.8 C1335.7 863.1 1331.1 864.8 1330.0 868.6 C1328.9 872.4 1333.3 878.3 1334.6 881.5 C1335.9 884.7 1336.6 886.4 1337.9 888.0 C1339.2 889.6 1341.9 890.8 1342.7 891.3" stroke="#FAFAFA" stroke-width="1.9"/><path d="M1350.8 897.8 C1352.7 900.5 1359.0 910.0 1362.2 914.0 C1365.5 918.0 1369.0 920.8 1370.3 922.1" stroke="#DADADA" stroke-width="1.1"/><path d="M1320.0 881.5 C1317.8 883.1 1308.3 888.6 1307.0 891.3 C1305.7 894.0 1313.5 894.8 1311.9 897.8 C1310.3 900.8 1301.9 907.0 1297.3 909.1 C1292.7 911.2 1286.5 910.4 1284.3 910.7" stroke="#FAFAFA" stroke-width="1.8"/><path d="M1260.0 887.0 C1261.7 887.5 1266.8 886.7 1270.0 890.0 C1273.2 893.3 1277.5 904.2 1279.0 907.0" stroke="#FAFAFA" stroke-width="1.5"/><path d="M1290.0 778.0 C1291.2 776.8 1294.8 774.0 1297.0 771.0 C1299.2 768.0 1302.0 761.8 1303.0 760.0" stroke="#FAFAFA" stroke-width="1.5"/></g><rect x="1472.4" y="601.9" width="24" height="15" rx="2.5" fill="#F2F2F2" stroke="#B9B9B9" stroke-width="1.2"/><text x="1484.4" y="612.7" font-size="9.3" font-weight="bold" fill="#767676" text-anchor="middle" font-family="Liberation Sans">E35</text><rect x="1520.8" y="600.8" width="24" height="15" rx="2.5" fill="#F2F2F2" stroke="#B9B9B9" stroke-width="1.2"/><text x="1532.8" y="611.6" font-size="9.3" font-weight="bold" fill="#767676" text-anchor="middle" font-family="Liberation Sans">B39</text><rect x="1290.8" y="612.0" width="30" height="15" rx="2.5" fill="#F2F2F2" stroke="#B9B9B9" stroke-width="1.2"/><text x="1305.8" y="622.8" font-size="9.3" font-weight="bold" fill="#767676" text-anchor="middle" font-family="Liberation Sans">B272</text><rect x="1462.2" y="653.3" width="22" height="15" rx="2.5" fill="#F2F2F2" stroke="#B9B9B9" stroke-width="1.2"/><text x="1473.2" y="664.1" font-size="9.3" font-weight="bold" fill="#767676" text-anchor="middle" font-family="Liberation Sans">A5</text><rect x="1396.9" y="680.7" width="25" height="15" rx="2.5" fill="#F2F2F2" stroke="#B9B9B9" stroke-width="1.2"/><text x="1409.4" y="691.5" font-size="9.3" font-weight="bold" fill="#767676" text-anchor="middle" font-family="Liberation Sans">B36</text><rect x="1191.6" y="724.5" width="26" height="15" rx="2.5" fill="#F2F2F2" stroke="#B9B9B9" stroke-width="1.2"/><text x="1204.6" y="735.3" font-size="9.3" font-weight="bold" fill="#767676" text-anchor="middle" font-family="Liberation Sans">B38</text><rect x="1541.5" y="720.9" width="30" height="15" rx="2.5" fill="#F2F2F2" stroke="#B9B9B9" stroke-width="1.2"/><text x="1556.5" y="731.7" font-size="9.3" font-weight="bold" fill="#767676" text-anchor="middle" font-family="Liberation Sans">B293</text><rect x="1329.0" y="734.0" width="22" height="15" rx="2.5" fill="#F2F2F2" stroke="#B9B9B9" stroke-width="1.2"/><text x="1340.0" y="744.8" font-size="9.3" font-weight="bold" fill="#767676" text-anchor="middle" font-family="Liberation Sans">B9</text><rect x="1519.7" y="763.6" width="30" height="15" rx="2.5" fill="#F2F2F2" stroke="#B9B9B9" stroke-width="1.2"/><text x="1534.7" y="774.4" font-size="9.3" font-weight="bold" fill="#767676" text-anchor="middle" font-family="Liberation Sans">B294</text><rect x="1263.3" y="809.5" width="25" height="15" rx="2.5" fill="#F2F2F2" stroke="#B9B9B9" stroke-width="1.2"/><text x="1275.8" y="820.3" font-size="9.3" font-weight="bold" fill="#767676" text-anchor="middle" font-family="Liberation Sans">A35</text><rect x="1329.0" y="816.5" width="25" height="15" rx="2.5" fill="#F2F2F2" stroke="#B9B9B9" stroke-width="1.2"/><text x="1341.5" y="827.3" font-size="9.3" font-weight="bold" fill="#767676" text-anchor="middle" font-family="Liberation Sans">B36</text><rect x="1435.0" y="811.3" width="24" height="15" rx="2.5" fill="#F2F2F2" stroke="#B9B9B9" stroke-width="1.2"/><text x="1447.0" y="822.1" font-size="9.3" font-weight="bold" fill="#767676" text-anchor="middle" font-family="Liberation Sans">E52</text><rect x="1477.3" y="818.8" width="24" height="15" rx="2.5" fill="#F2F2F2" stroke="#B9B9B9" stroke-width="1.2"/><text x="1489.3" y="829.6" font-size="9.3" font-weight="bold" fill="#767676" text-anchor="middle" font-family="Liberation Sans">B10</text><rect x="1339.0" y="838.7" width="22" height="15" rx="2.5" fill="#F2F2F2" stroke="#B9B9B9" stroke-width="1.2"/><text x="1350.0" y="849.5" font-size="9.3" font-weight="bold" fill="#767676" text-anchor="middle" font-family="Liberation Sans">B3</text><rect x="1234.5" y="853.3" width="25" height="15" rx="2.5" fill="#F2F2F2" stroke="#B9B9B9" stroke-width="1.2"/><text x="1247.0" y="864.1" font-size="9.3" font-weight="bold" fill="#767676" text-anchor="middle" font-family="Liberation Sans">A35</text><rect x="1507.0" y="866.5" width="30" height="15" rx="2.5" fill="#F2F2F2" stroke="#B9B9B9" stroke-width="1.2"/><text x="1522.0" y="877.3" font-size="9.3" font-weight="bold" fill="#767676" text-anchor="middle" font-family="Liberation Sans">B463</text><rect x="1561.4" y="869.1" width="24" height="15" rx="2.5" fill="#F2F2F2" stroke="#B9B9B9" stroke-width="1.2"/><text x="1573.4" y="879.9" font-size="9.3" font-weight="bold" fill="#767676" text-anchor="middle" font-family="Liberation Sans">E52</text><rect x="1461.6" y="884.8" width="30" height="15" rx="2.5" fill="#F2F2F2" stroke="#B9B9B9" stroke-width="1.2"/><text x="1476.6" y="895.6" font-size="9.3" font-weight="bold" fill="#767676" text-anchor="middle" font-family="Liberation Sans">B294</text><rect x="1275.4" y="909.6" width="30" height="15" rx="2.5" fill="#F2F2F2" stroke="#B9B9B9" stroke-width="1.2"/><text x="1290.4" y="920.4" font-size="9.3" font-weight="bold" fill="#767676" text-anchor="middle" font-family="Liberation Sans">B500</text><rect x="1474.7" y="931.0" width="30" height="15" rx="2.5" fill="#F2F2F2" stroke="#B9B9B9" stroke-width="1.2"/><text x="1489.7" y="941.8" font-size="9.3" font-weight="bold" fill="#767676" text-anchor="middle" font-family="Liberation Sans">B296</text><rect x="1210" y="917.2" width="5.4" height="5.4" fill="#F25022"/><rect x="1216.4" y="917.2" width="5.4" height="5.4" fill="#7FBA00"/><rect x="1210" y="923.6" width="5.4" height="5.4" fill="#00A4EF"/><rect x="1216.4" y="923.6" width="5.4" height="5.4" fill="#FFB900"/></svg>
<span class="t" style="top:621.10px;font-size:15px;color:#8C8C8C;left:1335.00px;transform-origin:0 50%;transform:scaleX(1.0544);text-shadow:0 0 2px #EFEFEF,0 0 2px #EFEFEF;-webkit-text-stroke:0.35px #8C8C8C;">Germersheim</span>
<span class="t" style="top:630.15px;font-size:14px;color:#8C8C8C;left:1235.00px;transform-origin:0 50%;transform:scaleX(1.1054);text-shadow:0 0 2px #EFEFEF,0 0 2px #EFEFEF;-webkit-text-stroke:0.35px #8C8C8C;">Landau in</span>
<span class="t" style="top:647.15px;font-size:14px;color:#8C8C8C;left:1237.50px;transform-origin:0 50%;transform:scaleX(1.1222);text-shadow:0 0 2px #EFEFEF,0 0 2px #EFEFEF;-webkit-text-stroke:0.35px #8C8C8C;">der Pfalz</span>
<span class="t" style="top:684.90px;font-size:15px;color:#8C8C8C;left:1451.40px;transform-origin:0 50%;transform:scaleX(1.0624);text-shadow:0 0 2px #EFEFEF,0 0 2px #EFEFEF;-webkit-text-stroke:0.35px #8C8C8C;">Bruchsal</span>
<span class="t" style="top:742.30px;font-size:15px;color:#8C8C8C;left:1508.50px;transform-origin:0 50%;transform:scaleX(1.0336);text-shadow:0 0 2px #EFEFEF,0 0 2px #EFEFEF;-webkit-text-stroke:0.35px #8C8C8C;">Bretten</span>
<span class="t" style="top:760.36px;font-size:18px;color:#8C8C8C;left:1356.90px;transform-origin:0 50%;transform:scaleX(1.0643);text-shadow:0 0 2px #EFEFEF,0 0 2px #EFEFEF;-webkit-text-stroke:0.35px #8C8C8C;">Karlsruhe</span>
<span class="t" style="top:788.10px;font-size:15px;color:#8C8C8C;left:1261.20px;transform-origin:0 50%;transform:scaleX(1.0566);text-shadow:0 0 2px #EFEFEF,0 0 2px #EFEFEF;-webkit-text-stroke:0.35px #8C8C8C;">Rheinstetten</span>
<span class="t" style="top:805.00px;font-size:15px;color:#8C8C8C;left:1368.90px;transform-origin:0 50%;transform:scaleX(1.0621);text-shadow:0 0 2px #EFEFEF,0 0 2px #EFEFEF;-webkit-text-stroke:0.35px #8C8C8C;">Ettlingen</span>
<span class="t" style="top:803.10px;font-size:15px;color:#8C8C8C;left:1552.70px;transform-origin:0 50%;text-shadow:0 0 2px #EFEFEF,0 0 2px #EFEFEF;-webkit-text-stroke:0.35px #8C8C8C;">Mühlacker</span>
<span class="t" style="top:836.37px;font-size:20px;color:#8C8C8C;left:1487.00px;transform-origin:0 50%;transform:scaleX(0.9797);text-shadow:0 0 2px #EFEFEF,0 0 2px #EFEFEF;-webkit-text-stroke:0.35px #8C8C8C;">Pforzheim</span>
<span class="t" style="top:863.90px;font-size:15px;color:#8C8C8C;left:1282.60px;transform-origin:0 50%;transform:scaleX(1.0646);text-shadow:0 0 2px #EFEFEF,0 0 2px #EFEFEF;-webkit-text-stroke:0.35px #8C8C8C;">Rastatt</span>
<span class="t" style="top:896.90px;font-size:15px;color:#8C8C8C;left:1325.70px;transform-origin:0 50%;transform:scaleX(1.0174);text-shadow:0 0 2px #EFEFEF,0 0 2px #EFEFEF;-webkit-text-stroke:0.35px #8C8C8C;">Gaggenau</span>
<span class="t" style="top:930.30px;font-size:15px;color:#8C8C8C;left:1278.00px;transform-origin:0 50%;transform:scaleX(1.0191);text-shadow:0 0 2px #EFEFEF,0 0 2px #EFEFEF;-webkit-text-stroke:0.35px #8C8C8C;">Baden-Baden</span>
<span class="t" style="top:918.51px;font-size:9.2px;color:#8a8a8a;left:1225.00px;transform-origin:0 50%;transform:scaleX(1.0649);">Microsoft Bing</span>
<span class="t" style="top:920.36px;font-size:10.8px;color:#111;left:1293.00px;transform-origin:0 50%;transform:scaleX(1.0126);text-shadow:0 0 2px #fff,0 0 2px #fff,0 0 2px #fff;">© 2025 TomTom, © 2025 Microsoft Corporation</span>
<span class="t" style="top:920.36px;font-size:10.8px;color:#2A3FB8;left:1530.20px;transform-origin:0 50%;transform:scaleX(0.9969);text-decoration:underline;text-shadow:0 0 2px #fff,0 0 2px #fff;">Terms</span>
<svg style="left:0;top:0" width="1914" height="1079"><circle cx="1397.4" cy="771.8" r="4.2" fill="#C8553A"/><path d="M1397.4 767.6 A4.2 4.2 0 0 0 1397.4 776 Z" fill="#2E4A9E"/><circle cx="1397.4" cy="771.8" r="4.2" fill="none" stroke="#3B3F7A" stroke-width="0.8"/></svg>
</div></div>
<div class="r" style="left:1683.00px;top:107.00px;width:1.00px;height:875.00px;background:#6C8497;"></div>
<div class="r" style="left:1684.00px;top:107.00px;width:200.50px;height:875.00px;background:#fff;"></div>
<div class="r" style="left:1684.00px;top:982.00px;width:200.50px;height:35.00px;background:#F3F3F3;"></div>
<svg style="left:1697.5px;top:121px" width="14" height="10" viewBox="0 0 14 10"><g stroke="#6E879B" stroke-width="1.2"><path d="M0 0.7 H13.4 M2.4 4.9 H11 M5 9.1 H8.4"/></g></svg>
<span class="t" style="top:118.79px;font-size:15.6px;color:#6E879B;font-weight:bold;left:1720.50px;transform-origin:0 50%;transform:scaleX(0.9443);">Filter</span>
<svg style="left:1864px;top:122px" width="8" height="8" viewBox="0 0 8 8"><path d="M0.8 0.6 L3.8 4 L0.8 7.4 M4 0.6 L7 4 L4 7.4" fill="none" stroke="#6E879B" stroke-width="1.2"/></svg>
<div class="r" style="left:1692.00px;top:152.00px;width:180.00px;height:31.00px;background:#fff;box-sizing:border-box;border:1px solid #64809A;border-radius:2px;"></div>
<svg style="left:1704.6px;top:160.6px" width="12" height="12" viewBox="0 0 12 12"><circle cx="4.6" cy="4.6" r="3.6" fill="none" stroke="#93A0AB" stroke-width="1.1"/><path d="M7.2 7.2 L11 11" stroke="#93A0AB" stroke-width="1.1"/></svg>
<span class="t" style="top:160.33px;font-size:13.2px;color:#8492A0;left:1732.00px;transform-origin:0 50%;transform:scaleX(0.9389);">Suchen</span>
<div class="r" style="left:1684.00px;top:186.60px;width:200.50px;height:1.00px;background:#6C8497;"></div>
<span class="t" style="top:207.15px;font-size:11.4px;color:#7E8C99;left:1692.70px;transform-origin:0 50%;transform:scaleX(1.0251);">Filter für alle Seiten</span>
<span class="t" style="top:206.09px;font-size:11px;color:#7E8C99;font-weight:bold;left:1862.00px;transform-origin:0 50%;transform:scaleX(0.9158);">...</span>
<div class="r" style="left:1692.00px;top:229.00px;width:184.00px;height:42.00px;background:#fff;box-sizing:border-box;border:1px solid #D6D6D6;box-shadow:0 1px 2px rgba(0,0,0,0.12);"></div>
<span class="t" style="top:236.44px;font-size:12px;color:#201F1E;font-weight:bold;left:1701.60px;transform-origin:0 50%;transform:scaleX(1.0214);">Mandant</span>
<span class="t" style="top:252.54px;font-size:12px;color:#252423;left:1701.60px;transform-origin:0 50%;transform:scaleX(0.9531);">ist 920</span>
<svg style="left:1832.6px;top:238.4px" width="9" height="6" viewBox="0 0 9 6"><path d="M0.5 0.6 L4.5 4.8 L8.5 0.6" fill="none" stroke="#444" stroke-width="1"/></svg>
<svg style="left:1853.6px;top:236.2px" width="11" height="11" viewBox="0 0 11 11"><path d="M6.4 0.8 L10.2 4 L5.6 9.2 H3 L0.8 7.2 Z M3.2 4.4 L7 7.6 M3 9.4 H9.6" fill="none" stroke="#555" stroke-width="0.9" stroke-linejoin="round"/></svg>
</body></html>
